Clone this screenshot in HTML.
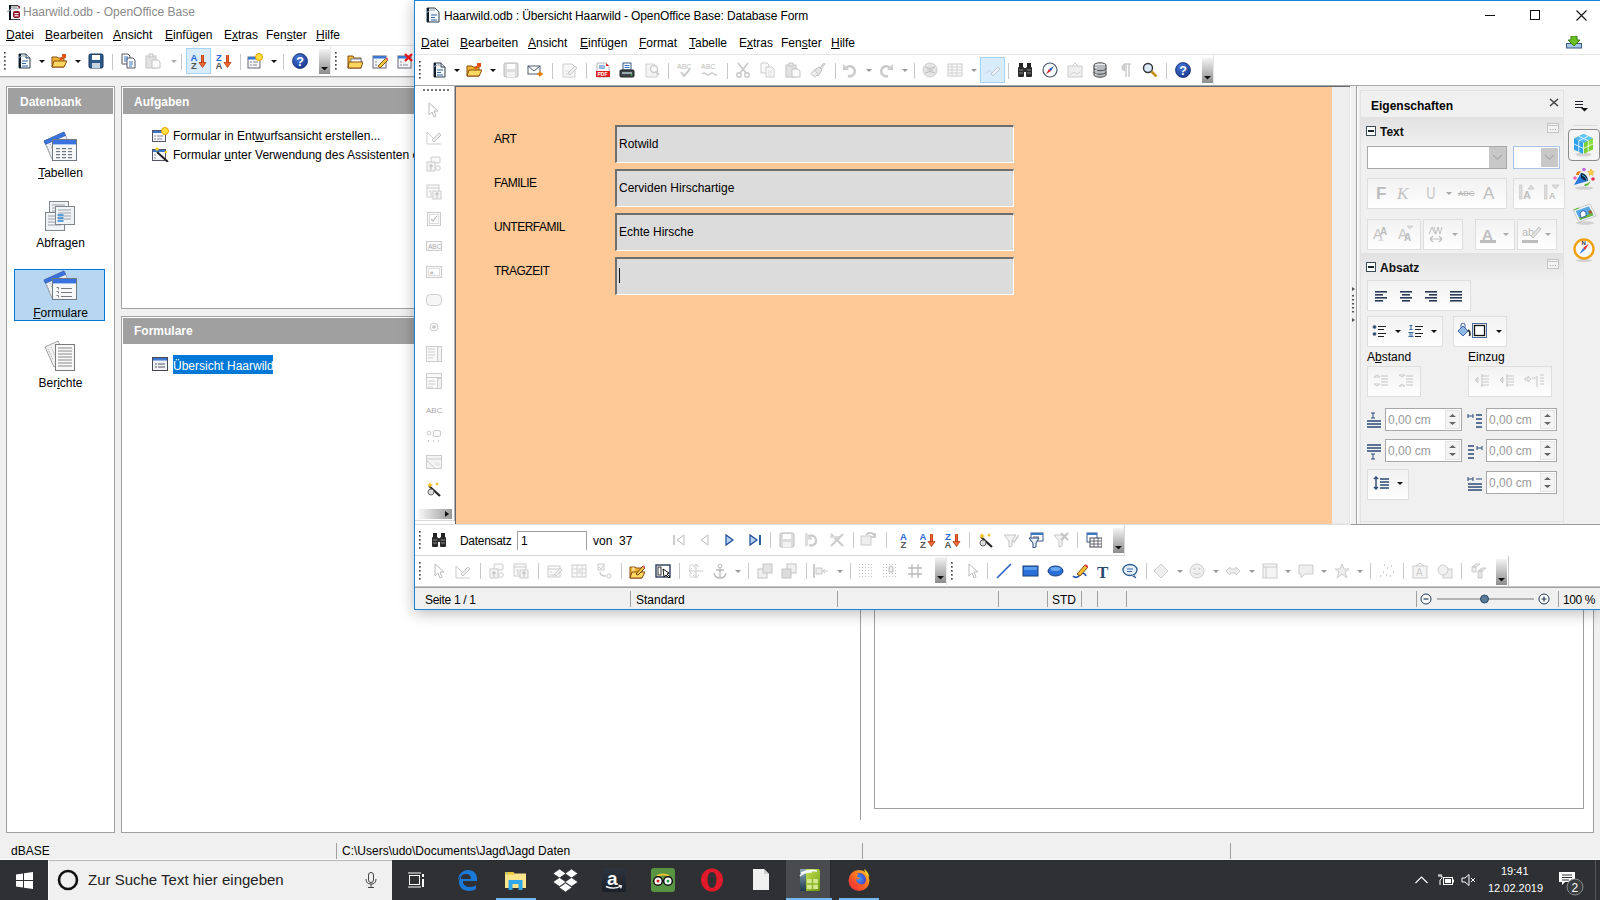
<!DOCTYPE html>
<html><head><meta charset="utf-8">
<style>
*{box-sizing:border-box;margin:0;padding:0}
html,body{width:1600px;height:900px;overflow:hidden;background:#f0f0f0;font-family:"Liberation Sans",sans-serif;font-size:12px;color:#000}
.a{position:absolute}
.t{position:absolute;white-space:nowrap;line-height:1}
u{text-decoration:underline;text-underline-offset:1px}
</style></head><body>
<div class="a" style="left:0px;top:0px;width:1600px;height:76px;background:#fff"></div>
<svg class="a" style="left:4px;top:2px;" width="16" height="18" viewBox="0 0 16 18"><path d="M5.5 3.5h8.5l3.5 3.5v10.5h-12z" fill="#fff" stroke="#3a3a3a"/><path d="M5 3h2v15H5z" fill="#0a1420"/><path d="M3 10q6-5 12-3" stroke="#aab" fill="none" stroke-width="1.2"/><path d="M7 5h6" stroke="#777"/><path d="M14 4l3 3" stroke="#8a1a2a" stroke-width="1.5"/><rect x="9" y="9" width="7" height="7" rx="2" fill="#8c0e24"/><rect x="10.5" y="11" width="4" height="1.2" fill="#fff"/><rect x="10.5" y="13.2" width="4" height="1.2" fill="#fff"/></svg>
<div class="t" style="left:23px;top:6px;font-size:12px;color:#8a8a8a">Haarwild.odb - OpenOffice Base</div>
<div class="t" style="left:6px;top:29px;font-size:12px;"><u>D</u>atei</div>
<div class="t" style="left:45px;top:29px;font-size:12px;"><u>B</u>earbeiten</div>
<div class="t" style="left:113px;top:29px;font-size:12px;"><u>A</u>nsicht</div>
<div class="t" style="left:165px;top:29px;font-size:12px;"><u>E</u>infügen</div>
<div class="t" style="left:224px;top:29px;font-size:12px;">E<u>x</u>tras</div>
<div class="t" style="left:266px;top:29px;font-size:12px;">Fen<u>s</u>ter</div>
<div class="t" style="left:316px;top:29px;font-size:12px;"><u>H</u>ilfe</div>
<div class="a" style="left:0px;top:45px;width:1600px;height:1px;background:#e6e6e6"></div>
<div class="a" style="left:0px;top:76px;width:1600px;height:1px;background:#a8a8a8"></div>
<div class="a" style="left:0px;top:77px;width:1600px;height:1px;background:#d8d8d8"></div>
<div class="a" style="left:6px;top:86px;width:109px;height:747px;background:#fff;border:1px solid #a0a0a0"></div>
<div class="a" style="left:8px;top:88px;width:105px;height:26px;background:#a0a0a0"></div>
<div class="t" style="left:20px;top:96px;font-size:12px;color:#fff;font-weight:bold">Datenbank</div>
<div class="a" style="left:121px;top:86px;width:1479px;height:223px;background:#fff;border:1px solid #a0a0a0"></div>
<div class="a" style="left:123px;top:88px;width:1477px;height:26px;background:#a0a0a0"></div>
<div class="t" style="left:134px;top:96px;font-size:12px;color:#fff;font-weight:bold">Aufgaben</div>
<div class="a" style="left:121px;top:316px;width:1473px;height:517px;background:#fff;border:1px solid #a0a0a0"></div>
<div class="a" style="left:123px;top:318px;width:1471px;height:26px;background:#a0a0a0"></div>
<div class="t" style="left:134px;top:325px;font-size:12px;color:#fff;font-weight:bold">Formulare</div>
<div class="a" style="left:14px;top:269px;width:91px;height:52px;background:#b6d6f1;border:1px solid #0078d7"></div>
<div class="t" style="left:6px;width:109px;text-align:center;top:167px"><u>T</u>abellen</div>
<div class="t" style="left:6px;width:109px;text-align:center;top:237px">Abfra<u>g</u>en</div>
<div class="t" style="left:6px;width:109px;text-align:center;top:307px"><u>F</u>ormulare</div>
<div class="t" style="left:6px;width:109px;text-align:center;top:377px">Ber<u>i</u>chte</div>
<div class="t" style="left:173px;top:130px;font-size:12px;">Formular in Ent<u>w</u>urfsansicht erstellen...</div>
<div class="t" style="left:173px;top:149px;font-size:12px;">Formular <u>u</u>nter Verwendung des Assistenten erstellen...</div>
<div class="a" style="left:173px;top:355px;width:100px;height:19px;background:#0078d7"></div>
<div class="t" style="left:173px;top:360px;font-size:12px;color:#fff">Übersicht Haarwild</div>
<div class="a" style="left:860px;top:610px;width:1px;height:210px;background:#a0a0a0"></div>
<div class="a" style="left:874px;top:600px;width:710px;height:209px;border:1px solid #a0a0a0;border-top:none"></div>
<div class="t" style="left:11px;top:845px;font-size:12px;">dBASE</div>
<div class="a" style="left:336px;top:843px;width:1px;height:16px;background:#a0a0a0"></div>
<div class="t" style="left:342px;top:845px;font-size:12px;">C:\Users\udo\Documents\Jagd\Jagd Daten</div>
<div class="a" style="left:862px;top:843px;width:1px;height:16px;background:#a0a0a0"></div>
<div class="a" style="left:1230px;top:843px;width:1px;height:16px;background:#a0a0a0"></div>
<div class="a" style="left:0px;top:860px;width:1600px;height:40px;background:#2e3034"></div>
<div class="a" style="left:392px;top:860px;width:1208px;height:1px;background:#292b2f"></div>
<div class="a" style="left:48px;top:860px;width:344px;height:40px;background:#f0f0f0;border-top:1px solid #b8b8b8;border-left:1px solid #fafafa"></div>
<div class="a" style="left:0px;top:859px;width:1600px;height:1px;background:#fafafa"></div>
<div class="a" style="left:786px;top:860px;width:44px;height:40px;background:#4a4b4e"></div>
<div class="a" style="left:830px;top:860px;width:1px;height:40px;background:#2a2b2e"></div>
<div class="t" style="left:88px;top:872px;font-size:15px;color:#222">Zur Suche Text hier eingeben</div>
<div class="t" style="left:1501px;top:866px;font-size:11px;color:#fff">19:41</div>
<div class="t" style="left:1488px;top:883px;font-size:11px;color:#fff">12.02.2019</div>
<svg class="a" style="left:16px;top:872px;" width="17" height="17" viewBox="0 0 17 17"><path d="M0 2.5l7-1v6.5H0z M8 1.3l9-1.3v8H8z M0 9h7v6.5l-7-1z M8 9h9v8l-9-1.3z" fill="#fff"/></svg>
<svg class="a" style="left:57px;top:869px;" width="22" height="22" viewBox="0 0 22 22"><circle cx="11" cy="11" r="9" fill="none" stroke="#111" stroke-width="2.6"/></svg>
<svg class="a" style="left:365px;top:872px;" width="12" height="16" viewBox="0 0 12 16"><rect x="3.5" y="0.5" width="5" height="10" rx="2.5" fill="none" stroke="#444"/><path d="M1 7q0 5 5 5t5-5M6 12v3M3 15.5h6" stroke="#444" fill="none"/></svg>
<svg class="a" style="left:407px;top:872px;" width="18" height="16" viewBox="0 0 18 16"><rect x="2.5" y="3.5" width="10" height="9" fill="none" stroke="#fff"/><path d="M1 1h13M1 15h13" stroke="#fff"/><rect x="15" y="2" width="2" height="3" fill="#fff"/><rect x="15" y="7" width="2" height="8" fill="#fff"/></svg>
<svg class="a" style="left:456px;top:869px;" width="22" height="22" viewBox="0 0 22 22"><path d="M2 12C2 5 7 1 12 1c6 0 9 4 9 9v2H7c0 4 3 6 7 6 3 0 5-1 6-2v4c-2 1-4 2-7 2-6 0-10-4-10-9 0-3 1-5 3-7-1 2-1 3-1 4h10c0-3-2-5-5-5-4 0-7 3-8 7z" fill="#1a78d8"/></svg>
<svg class="a" style="left:504px;top:870px;" width="23" height="20" viewBox="0 0 23 20"><path d="M1 2h8l1.5 1.5H22V18H1z" fill="#fde58c"/><path d="M1 2h8l1.5 1.5v1H1z" fill="#f0c838"/><rect x="2" y="2.5" width="1.5" height="1" fill="#3ab0e0"/><path d="M4.5 10h14v10h-4v-6h-6v6h-4z" fill="#2ea8ea"/></svg>
<div class="a" style="left:496px;top:898px;width:40px;height:2px;background:#76b9ed"></div>
<svg class="a" style="left:553px;top:869px;" width="25" height="23" viewBox="0 0 25 23"><g fill="#fff" stroke="#2e3034" stroke-width=".7"><path d="M0 4.5L6.5 0 13 4.5 6.5 9z"/><path d="M12 4.5L18.5 0 25 4.5 18.5 9z"/><path d="M0 13L6.5 8.5 13 13 6.5 17.5z"/><path d="M12 13l6.5-4.5L25 13l-6.5 4.5z"/><path d="M6 18.5L12.5 14 19 18.5 12.5 23z"/></g></svg>
<svg class="a" style="left:602px;top:868px;" width="24" height="24" viewBox="0 0 24 24"><defs><linearGradient id="amz" x1="0" y1="0" x2="0" y2="1"><stop offset="0" stop-color="#2c3440"/><stop offset="1" stop-color="#1a2028"/></linearGradient></defs><rect x="0" y="0" width="24" height="24" rx="2" fill="url(#amz)"/><text x="5" y="17" font-size="19" font-weight="bold" font-family="Liberation Sans" fill="#fff">a</text><path d="M4 18.5q8 3.5 15-0.5" stroke="#fff" stroke-width="1.4" fill="none"/><path d="M16.5 17l3 .8-.8 2.6" stroke="#fff" stroke-width="1.2" fill="none"/></svg>
<svg class="a" style="left:651px;top:868px;" width="24" height="24" viewBox="0 0 24 24"><rect x="0" y="0" width="24" height="24" rx="3" fill="#589442"/><path d="M6 8q6-3 12 0" stroke="#f4c030" stroke-width="2" fill="none"/><circle cx="7" cy="13" r="4.3" fill="#fff" stroke="#111" stroke-width="1.5"/><circle cx="17" cy="13" r="4.3" fill="#fff" stroke="#111" stroke-width="1.5"/><circle cx="7" cy="13" r="1.5" fill="#d02020"/><circle cx="17" cy="13" r="1.5" fill="#20a040"/></svg>
<svg class="a" style="left:700px;top:868px;" width="24" height="24" viewBox="0 0 24 24"><ellipse cx="12" cy="12" rx="11" ry="11.5" fill="#e01a2a"/><ellipse cx="12" cy="12" rx="4.5" ry="8" fill="#2e3034"/></svg>
<svg class="a" style="left:753px;top:869px;" width="16" height="21" viewBox="0 0 16 21"><path d="M0 0h11l5 5v16H0z" fill="#f0f0f0"/><path d="M11 0v5h5" fill="#ccc"/></svg>
<svg class="a" style="left:798px;top:868px;" width="24" height="24" viewBox="0 0 24 24"><defs><linearGradient id="clg" x1="0" y1="0" x2="1" y2="1"><stop offset="0" stop-color="#d8f060"/><stop offset="1" stop-color="#6a9a10"/></linearGradient><linearGradient id="cls" x1="0" y1="0" x2="0" y2="1"><stop offset="0" stop-color="#8aa8b8"/><stop offset="1" stop-color="#1e3a4a"/></linearGradient></defs><path d="M2 1h19l1 2v19l-1 1H2z" fill="url(#clg)"/><path d="M2 1h6v22H2z" fill="url(#cls)"/><path d="M2 8q5-5 12-4M3 5q8-4 16-2" stroke="#f4f8f8" stroke-width="1.6" fill="none"/><rect x="9" y="11" width="11" height="10" fill="#d4e890"/><path d="M14.5 11v10M9 16h11" stroke="#8ab828" stroke-width="1.4"/></svg>
<div class="a" style="left:786px;top:898px;width:46px;height:2px;background:#76b9ed"></div>
<svg class="a" style="left:847px;top:868px;" width="24" height="24" viewBox="0 0 24 24"><defs><radialGradient id="ffg" cx=".45" cy=".45" r=".6"><stop offset="0" stop-color="#3aa0f0"/><stop offset="1" stop-color="#4a3ac8"/></radialGradient><linearGradient id="ffo" x1="0" y1="1" x2="1" y2="0"><stop offset="0" stop-color="#e8203a"/><stop offset=".6" stop-color="#ff7a20"/><stop offset="1" stop-color="#ffd030"/></linearGradient></defs><circle cx="12" cy="12.5" r="10.5" fill="url(#ffo)"/><circle cx="12.5" cy="11.5" r="6.5" fill="url(#ffg)"/><path d="M3 9c1 6 5 10 10 10 4 0 7-2 8-5-2 2-5 3-8 2-3-1-4-3-4-5 2 1 4 0 4-1l-3-1c0-2 1-3 2-3-3-1-6 0-8 3z" fill="url(#ffo)"/><path d="M17 1c2 1 5 4 5 8l-3-3z" fill="#ffd030"/></svg>
<div class="a" style="left:839px;top:898px;width:40px;height:2px;background:#76b9ed"></div>
<svg class="a" style="left:1415px;top:876px;" width="13" height="8" viewBox="0 0 13 8"><path d="M.5 7l6-6 6 6" stroke="#fff" fill="none" stroke-width="1.1"/></svg>
<svg class="a" style="left:1437px;top:874px;" width="17" height="12" viewBox="0 0 17 12"><path d="M2 0v2M4 0v2M1 2h4v2l-2 2v5" stroke="#fff" fill="none"/><rect x="6.5" y="3.5" width="9" height="7" fill="none" stroke="#fff"/><rect x="8" y="5" width="6" height="4" fill="#fff"/><rect x="15.5" y="5.5" width="1.5" height="3" fill="#fff"/></svg>
<svg class="a" style="left:1461px;top:874px;" width="15" height="12" viewBox="0 0 15 12"><path d="M1 4h3l4-3.5v11L4 8H1z" fill="none" stroke="#fff"/><path d="M10 4l4 4M14 4l-4 4" stroke="#fff"/></svg>
<svg class="a" style="left:1559px;top:872px;" width="25" height="25" viewBox="0 0 25 25"><path d="M0 0h16v10H6l-3 3v-3H0z" fill="#fff"/><path d="M3 3h10M3 5.5h10M3 8h7" stroke="#2e3034"/><circle cx="16" cy="15" r="8" fill="#3a3d40" stroke="#888"/><text x="12.5" y="19.5" font-size="12" font-family="Liberation Sans" fill="#fff">2</text></svg>
<div class="a" style="left:1595px;top:860px;width:1px;height:40px;background:#555"></div>
<div class="a" style="left:414px;top:0px;width:1186px;height:610px;background:#fff;border:1px solid #1883d7;border-right:none;box-shadow:0 3px 14px rgba(0,0,0,0.28)"></div>
<div class="t" style="left:444px;top:10px;font-size:12px;letter-spacing:-0.12px">Haarwild.odb : Übersicht Haarwild - OpenOffice Base: Database Form</div>
<div class="t" style="left:421px;top:37px;font-size:12px;"><u>D</u>atei</div>
<div class="t" style="left:460px;top:37px;font-size:12px;"><u>B</u>earbeiten</div>
<div class="t" style="left:528px;top:37px;font-size:12px;"><u>A</u>nsicht</div>
<div class="t" style="left:580px;top:37px;font-size:12px;"><u>E</u>infügen</div>
<div class="t" style="left:639px;top:37px;font-size:12px;"><u>F</u>ormat</div>
<div class="t" style="left:689px;top:37px;font-size:12px;"><u>T</u>abelle</div>
<div class="t" style="left:739px;top:37px;font-size:12px;">E<u>x</u>tras</div>
<div class="t" style="left:781px;top:37px;font-size:12px;">Fen<u>s</u>ter</div>
<div class="t" style="left:831px;top:37px;font-size:12px;"><u>H</u>ilfe</div>
<div class="a" style="left:415px;top:54px;width:1185px;height:1px;background:#e6e6e6"></div>
<div class="a" style="left:415px;top:85px;width:1185px;height:1px;background:#a8a8a8"></div>
<div class="a" style="left:415px;top:86px;width:1185px;height:438px;background:#f0f0f0"></div>
<div class="a" style="left:415px;top:86px;width:40px;height:438px;background:#fff"></div>
<div class="a" style="left:455px;top:86px;width:895px;height:438px;background:#efefef;border-left:1px solid #64686c;border-top:1px solid #64686c"></div>
<div class="a" style="left:456px;top:87px;width:876px;height:437px;background:#fec997"></div>
<div class="t" style="left:494px;top:133px;font-size:12px;letter-spacing:-0.5px">ART</div>
<div class="a" style="left:615px;top:125px;width:399px;height:38px;background:#dcdcdc;border-top:2px solid #6e6e6e;border-left:2px solid #6e6e6e;border-right:1px solid #fff;border-bottom:1px solid #fff"></div>
<div class="t" style="left:619px;top:138px;font-size:12px;">Rotwild</div>
<div class="t" style="left:494px;top:177px;font-size:12px;letter-spacing:-0.5px">FAMILIE</div>
<div class="a" style="left:615px;top:169px;width:399px;height:38px;background:#dcdcdc;border-top:2px solid #6e6e6e;border-left:2px solid #6e6e6e;border-right:1px solid #fff;border-bottom:1px solid #fff"></div>
<div class="t" style="left:619px;top:182px;font-size:12px;">Cerviden Hirschartige</div>
<div class="t" style="left:494px;top:221px;font-size:12px;letter-spacing:-0.5px">UNTERFAMIL</div>
<div class="a" style="left:615px;top:213px;width:399px;height:38px;background:#dcdcdc;border-top:2px solid #6e6e6e;border-left:2px solid #6e6e6e;border-right:1px solid #fff;border-bottom:1px solid #fff"></div>
<div class="t" style="left:619px;top:226px;font-size:12px;">Echte Hirsche</div>
<div class="t" style="left:494px;top:265px;font-size:12px;letter-spacing:-0.5px">TRAGZEIT</div>
<div class="a" style="left:615px;top:257px;width:399px;height:38px;background:#dcdcdc;border-top:2px solid #6e6e6e;border-left:2px solid #6e6e6e;border-right:1px solid #fff;border-bottom:1px solid #fff"></div>
<div class="a" style="left:619px;top:268px;width:1px;height:15px;background:#111"></div>
<div class="a" style="left:1358px;top:86px;width:242px;height:438px;background:#f0f0f0"></div>
<div class="a" style="left:415px;top:524px;width:1185px;height:64px;background:#fff"></div>
<div class="a" style="left:415px;top:555px;width:710px;height:1px;background:#d8d8d8"></div>
<div class="a" style="left:1124px;top:524px;width:1px;height:32px;background:#d8d8d8"></div>
<div class="a" style="left:415px;top:524px;width:936px;height:1px;background:#e0e0e0"></div>
<div class="a" style="left:415px;top:586px;width:1185px;height:1px;background:#c8c8c8"></div>
<div class="a" style="left:415px;top:587px;width:1185px;height:1px;background:#a0a0a0"></div>
<div class="a" style="left:415px;top:588px;width:1185px;height:21px;background:#f0f0f0"></div>
<div class="t" style="left:460px;top:535px;font-size:12px;letter-spacing:-0.3px">Datensatz</div>
<div class="a" style="left:517px;top:531px;width:70px;height:19px;background:#fff;border:1px solid #a0a0a0;border-bottom:none"></div>
<div class="t" style="left:521px;top:535px;font-size:12px;">1</div>
<div class="t" style="left:593px;top:535px;font-size:12px;">von&nbsp; 37</div>
<div class="t" style="left:425px;top:594px;font-size:12px;letter-spacing:-0.3px">Seite 1 / 1</div>
<div class="t" style="left:636px;top:594px;font-size:12px;">Standard</div>
<div class="t" style="left:1052px;top:594px;font-size:12px;">STD</div>
<div class="t" style="left:1563px;top:594px;font-size:12px;letter-spacing:-0.4px">100 %</div>
<div class="a" style="left:630px;top:591px;width:1px;height:16px;background:#a0a0a0"></div>
<div class="a" style="left:837px;top:591px;width:1px;height:16px;background:#a0a0a0"></div>
<div class="a" style="left:998px;top:591px;width:1px;height:16px;background:#a0a0a0"></div>
<div class="a" style="left:1047px;top:591px;width:1px;height:16px;background:#a0a0a0"></div>
<div class="a" style="left:1081px;top:591px;width:1px;height:16px;background:#a0a0a0"></div>
<div class="a" style="left:1097px;top:591px;width:1px;height:16px;background:#a0a0a0"></div>
<div class="a" style="left:1126px;top:591px;width:1px;height:16px;background:#a0a0a0"></div>
<div class="a" style="left:1416px;top:591px;width:1px;height:16px;background:#a0a0a0"></div>
<div class="a" style="left:1558px;top:591px;width:1px;height:16px;background:#a0a0a0"></div>
<div class="a" style="left:1332px;top:87px;width:18px;height:437px;background:#efefef"></div>
<div class="a" style="left:1350px;top:86px;width:1px;height:438px;background:#fff"></div>
<div class="a" style="left:1356px;top:86px;width:1px;height:438px;background:#a0a0a0"></div>
<div class="a" style="left:1357px;top:86px;width:1px;height:438px;background:#fff"></div>
<svg class="a" style="left:1351px;top:286px;" width="5" height="40" viewBox="0 0 5 40"><path d="M1 1l3 2-3 2z" fill="#555"/><rect x="1" y="9" width="2" height="1.5" fill="#555"/><rect x="1" y="13" width="2" height="1.5" fill="#555"/><rect x="1" y="17" width="2" height="1.5" fill="#555"/><rect x="1" y="21" width="2" height="1.5" fill="#555"/><rect x="1" y="25" width="2" height="1.5" fill="#555"/><path d="M1 32l3 2-3 2z" fill="#555"/></svg>
<div class="a" style="left:1360px;top:90px;width:204px;height:434px;background:#f0f0f0;border:1px solid #e2e2e2;border-bottom:none"></div>
<div class="t" style="left:1371px;top:100px;font-size:12px;font-weight:bold;color:#000">Eigenschaften</div>
<svg class="a" style="left:1549px;top:98px;" width="10" height="9" viewBox="0 0 10 9"><path d="M1 1l8 7M9 1l-8 7" stroke="#444" stroke-width="1.6"/></svg>
<div class="a" style="left:1361px;top:117px;width:202px;height:28px;background:linear-gradient(to bottom,#e2e2e2,#f0f0f0)"></div>
<svg class="a" style="left:1366px;top:126px;" width="10" height="10" viewBox="0 0 10 10"><rect x="0.5" y="0.5" width="9" height="9" fill="#fff" stroke="#3c4b5c"/><rect x="2" y="4" width="6" height="2" fill="#1a2530"/></svg>
<div class="t" style="left:1380px;top:126px;font-size:12px;font-weight:bold;color:#111">Text</div>
<svg class="a" style="left:1547px;top:123px;" width="12" height="10" viewBox="0 0 12 10"><rect x="0.5" y="0.5" width="11" height="9" fill="#f4f4f4" stroke="#c4c4c4"/><path d="M0.5 2.5h11" stroke="#c4c4c4"/><path d="M3 6.5h1M5.5 6.5h1M8 6.5h1" stroke="#999"/></svg>
<div class="a" style="left:1367px;top:146px;width:140px;height:23px;background:#fff;border:1px solid #a8a8a8"></div>
<div class="a" style="left:1489px;top:147px;width:17px;height:21px;background:#c8c8c8"></div>
<svg class="a" style="left:1491px;top:153px;" width="13" height="8" viewBox="0 0 13 8"><path d="M2 2l4.5 4 4.5-4" stroke="#9a9a9a" fill="none"/></svg>
<div class="a" style="left:1513px;top:146px;width:47px;height:23px;background:#fff;border:1px solid #a9c3e4"></div>
<div class="a" style="left:1541px;top:148px;width:17px;height:19px;background:#c8c8c8"></div>
<svg class="a" style="left:1543px;top:153px;" width="13" height="8" viewBox="0 0 13 8"><path d="M2 2l4.5 4 4.5-4" stroke="#9a9a9a" fill="none"/></svg>
<div class="a" style="left:1367px;top:178px;width:140px;height:31px;background:linear-gradient(to bottom,#f2f2f2,#fefefe);border:1px solid #dedede"></div>
<div class="a" style="left:1513px;top:178px;width:52px;height:31px;background:linear-gradient(to bottom,#f2f2f2,#fefefe);border:1px solid #dedede"></div>
<div class="a" style="left:1367px;top:219px;width:54px;height:31px;background:linear-gradient(to bottom,#f2f2f2,#fefefe);border:1px solid #dedede"></div>
<div class="a" style="left:1423px;top:219px;width:40px;height:31px;background:linear-gradient(to bottom,#f2f2f2,#fefefe);border:1px solid #dedede"></div>
<div class="a" style="left:1475px;top:219px;width:40px;height:31px;background:linear-gradient(to bottom,#f2f2f2,#fefefe);border:1px solid #dedede"></div>
<div class="a" style="left:1517px;top:219px;width:40px;height:31px;background:linear-gradient(to bottom,#f2f2f2,#fefefe);border:1px solid #dedede"></div>
<div class="t" style="left:1376px;top:184px;font:bold 17px Liberation Sans;color:#bdbdbd">F</div>
<div class="t" style="left:1397px;top:184px;font:italic 17px Liberation Serif;color:#c2c2c2">K</div>
<div class="t" style="left:1425px;top:185px;font:16px Liberation Sans;color:#c8c8c8;transform:scaleX(.8)">U</div>
<svg class="a" style="left:1446px;top:192px;" width="6" height="4" viewBox="0 0 6 4"><path d="M0 0h6l-3 3z" fill="#aaa"/></svg>
<div class="t" style="left:1458px;top:189px;font:8px Liberation Sans;color:#b4b4b4;text-decoration:line-through">ABC</div>
<div class="t" style="left:1483px;top:184px;font:17px Liberation Sans;color:#bdbdbd">A</div>
<svg class="a" style="left:1519px;top:184px;" width="17" height="16" viewBox="0 0 17 16"><rect x="0" y="1" width="3" height="14" fill="#ddd" stroke="#c4c4c4" stroke-width=".6"/><text x="4" y="15" font-size="11" font-weight="bold" font-family="Liberation Sans" fill="#c0c0c0">A</text><path d="M9 5l3-4 3 4z" fill="#ddd" stroke="#c4c4c4" stroke-width=".8"/></svg>
<svg class="a" style="left:1544px;top:184px;" width="17" height="16" viewBox="0 0 17 16"><rect x="0" y="1" width="3" height="14" fill="#ddd" stroke="#c4c4c4" stroke-width=".6"/><text x="5" y="15" font-size="9" font-weight="bold" font-family="Liberation Sans" fill="#c0c0c0">A</text><path d="M8 1h7l-3.5 4z" fill="#ddd" stroke="#c4c4c4" stroke-width=".8"/></svg>
<svg class="a" style="left:1373px;top:225px;" width="17" height="18" viewBox="0 0 17 18"><text x="0" y="14" font-size="14" font-family="Liberation Sans" fill="#c6c6c6">A</text><text x="7" y="10" font-size="10" font-weight="bold" font-family="Liberation Sans" fill="#bcbcbc">A</text><path d="M8 13l3 3h-6z" fill="#ddd"/></svg>
<svg class="a" style="left:1398px;top:225px;" width="17" height="18" viewBox="0 0 17 18"><text x="0" y="14" font-size="14" font-family="Liberation Sans" fill="#c6c6c6">A</text><text x="6" y="16" font-size="10" font-weight="bold" font-family="Liberation Sans" fill="#bcbcbc">A</text><path d="M9 1h6l-3 3z" fill="#ddd" stroke="#c8c8c8" stroke-width=".6"/></svg>
<svg class="a" style="left:1428px;top:226px;" width="16" height="17" viewBox="0 0 16 17"><path d="M1 8l3-7 3 7M6 1l2 7 2-7 2 7 2-7" stroke="#c0c0c0" fill="none"/><path d="M2 13h12M2 13l3-3M2 13l3 3M14 13l-3-3M14 13l-3 3" stroke="#c0c0c0" fill="none" stroke-width="1.2"/></svg>
<svg class="a" style="left:1452px;top:233px;" width="6" height="4" viewBox="0 0 6 4"><path d="M0 0h6l-3 3z" fill="#aaa"/></svg>
<div class="t" style="left:1482px;top:226px;font:bold 15px Liberation Sans;color:#c0c0c0">A</div>
<div class="a" style="left:1480px;top:240px;width:16px;height:3px;background:#bcbcbc"></div>
<svg class="a" style="left:1503px;top:233px;" width="6" height="4" viewBox="0 0 6 4"><path d="M0 0h6l-3 3z" fill="#aaa"/></svg>
<div class="t" style="left:1522px;top:226px;font:11px Liberation Sans;color:#bbb">ab</div>
<svg class="a" style="left:1529px;top:225px;" width="12" height="13" viewBox="0 0 12 13"><path d="M2 11l8-9 2 2-8 9z" fill="#e4e4e4" stroke="#c0c0c0"/></svg>
<div class="a" style="left:1522px;top:240px;width:16px;height:3px;background:#bcbcbc"></div>
<svg class="a" style="left:1545px;top:233px;" width="6" height="4" viewBox="0 0 6 4"><path d="M0 0h6l-3 3z" fill="#aaa"/></svg>
<div class="a" style="left:1361px;top:253px;width:202px;height:28px;background:linear-gradient(to bottom,#e2e2e2,#f0f0f0)"></div>
<svg class="a" style="left:1366px;top:262px;" width="10" height="10" viewBox="0 0 10 10"><rect x="0.5" y="0.5" width="9" height="9" fill="#fff" stroke="#3c4b5c"/><rect x="2" y="4" width="6" height="2" fill="#1a2530"/></svg>
<div class="t" style="left:1380px;top:262px;font-size:12px;font-weight:bold;color:#111">Absatz</div>
<svg class="a" style="left:1547px;top:259px;" width="12" height="10" viewBox="0 0 12 10"><rect x="0.5" y="0.5" width="11" height="9" fill="#f4f4f4" stroke="#c4c4c4"/><path d="M0.5 2.5h11" stroke="#c4c4c4"/><path d="M3 6.5h1M5.5 6.5h1M8 6.5h1" stroke="#999"/></svg>
<div class="a" style="left:1367px;top:280px;width:104px;height:31px;background:linear-gradient(to bottom,#f2f2f2,#fefefe);border:1px solid #dedede"></div>
<svg class="a" style="left:1375px;top:291px;" width="13" height="13" viewBox="0 0 13 13"><rect x="0" y="0" width="12" height="1.6" fill="#2a3b55"/><rect x="0" y="3" width="8" height="1.6" fill="#2a3b55"/><rect x="0" y="6" width="12" height="1.6" fill="#2a3b55"/><rect x="0" y="9" width="8" height="1.6" fill="#2a3b55"/></svg>
<svg class="a" style="left:1400px;top:291px;" width="13" height="13" viewBox="0 0 13 13"><rect x="0" y="0" width="12" height="1.6" fill="#2a3b55"/><rect x="2" y="3" width="8" height="1.6" fill="#2a3b55"/><rect x="0" y="6" width="12" height="1.6" fill="#2a3b55"/><rect x="2" y="9" width="8" height="1.6" fill="#2a3b55"/></svg>
<svg class="a" style="left:1425px;top:291px;" width="13" height="13" viewBox="0 0 13 13"><rect x="0" y="0" width="12" height="1.6" fill="#2a3b55"/><rect x="4" y="3" width="8" height="1.6" fill="#2a3b55"/><rect x="0" y="6" width="12" height="1.6" fill="#2a3b55"/><rect x="4" y="9" width="8" height="1.6" fill="#2a3b55"/></svg>
<svg class="a" style="left:1450px;top:291px;" width="13" height="13" viewBox="0 0 13 13"><rect x="0" y="0" width="12" height="1.6" fill="#2a3b55"/><rect x="0" y="3" width="12" height="1.6" fill="#2a3b55"/><rect x="0" y="6" width="12" height="1.6" fill="#2a3b55"/><rect x="0" y="9" width="12" height="1.6" fill="#2a3b55"/></svg>
<div class="a" style="left:1367px;top:316px;width:76px;height:31px;background:linear-gradient(to bottom,#f2f2f2,#fefefe);border:1px solid #dedede"></div>
<div class="a" style="left:1453px;top:316px;width:54px;height:31px;background:linear-gradient(to bottom,#f2f2f2,#fefefe);border:1px solid #dedede"></div>
<svg class="a" style="left:1372px;top:324px;" width="16" height="13" viewBox="0 0 16 13"><circle cx="2.5" cy="3" r="1.8" fill="#2d4a6b" stroke="#9ab" stroke-width=".5"/><circle cx="2.5" cy="10" r="1.8" fill="#2d4a6b" stroke="#9ab" stroke-width=".5"/><path d="M6 2.5h8M6 5.5h6M6 9.5h8M6 12.5h6" stroke="#222" stroke-width="1"/></svg>
<svg class="a" style="left:1395px;top:330px;" width="6" height="4" viewBox="0 0 6 4"><path d="M0 0h6l-3 3z" fill="#111"/></svg>
<svg class="a" style="left:1408px;top:324px;" width="16" height="14" viewBox="0 0 16 14"><path d="M1.5 1.5h3M3 1.5v4M1.5 5.5h3M0.5 8.5h5M2 8.5v4M4 8.5v4M0.5 12.5h5" stroke="#3a6aa0" stroke-width="1"/><path d="M7 2.5h8M7 5.5h6M7 9.5h8M7 12.5h6" stroke="#222" stroke-width="1"/></svg>
<svg class="a" style="left:1431px;top:330px;" width="6" height="4" viewBox="0 0 6 4"><path d="M0 0h6l-3 3z" fill="#111"/></svg>
<svg class="a" style="left:1457px;top:323px;" width="14" height="15" viewBox="0 0 14 15"><path d="M1 8l5-5 5 5-5 5z" fill="#8fb8e8" stroke="#3a68a8"/><path d="M4 5V2a2 2 0 0 1 4 0v3" stroke="#3a68a8" fill="none"/><path d="M11 7q3 2 1.5 6" stroke="#222" fill="none" stroke-width="1.6"/></svg>
<svg class="a" style="left:1472px;top:323px;" width="15" height="15" viewBox="0 0 15 15"><rect x="0.5" y="0.5" width="14" height="14" fill="none" stroke="#4a6a98"/><rect x="2.5" y="2.5" width="10" height="10" fill="#fff" stroke="#111" stroke-width="1.3"/></svg>
<svg class="a" style="left:1496px;top:330px;" width="6" height="4" viewBox="0 0 6 4"><path d="M0 0h6l-3 3z" fill="#111"/></svg>
<div class="t" style="left:1367px;top:351px;font-size:12px;">A<u>b</u>stand</div>
<div class="t" style="left:1468px;top:351px;font-size:12px;">Einzug</div>
<div class="a" style="left:1367px;top:366px;width:54px;height:31px;background:linear-gradient(to bottom,#f2f2f2,#fefefe);border:1px solid #dedede"></div>
<div class="a" style="left:1468px;top:366px;width:84px;height:31px;background:linear-gradient(to bottom,#f2f2f2,#fefefe);border:1px solid #dedede"></div>
<svg class="a" style="left:1373px;top:374px;" width="16" height="13" viewBox="0 0 16 13"><path d="M1 3l3-2 3 2z M1 10l3 2 3-2z" fill="none" stroke="#ccc"/><path d="M8 2h7M8 5h7M8 8h7M8 11h7" stroke="#c4c4c4" stroke-width="1.2"/></svg>
<svg class="a" style="left:1398px;top:374px;" width="16" height="13" viewBox="0 0 16 13"><path d="M1 1l3 2 3-2z M1 12l3-2 3 2z" fill="none" stroke="#ccc"/><path d="M8 2h7M8 5h7M8 8h7M8 11h7" stroke="#c4c4c4" stroke-width="1.2"/></svg>
<svg class="a" style="left:1474px;top:374px;" width="16" height="13" viewBox="0 0 16 13"><path d="M1 6l3-3v6z" fill="#ddd" stroke="#ccc"/><path d="M7 2h8M9 5h6M9 8h6M7 11h8M8 0v13" stroke="#c8c8c8" stroke-width="1.1"/></svg>
<svg class="a" style="left:1499px;top:374px;" width="16" height="13" viewBox="0 0 16 13"><path d="M1 6l3-3v6z" fill="#ddd" stroke="#ccc"/><path d="M7 2h8M9 5h6M9 8h6M7 11h8M8 0v13" stroke="#c8c8c8" stroke-width="1.1"/></svg>
<svg class="a" style="left:1524px;top:374px;" width="20" height="13" viewBox="0 0 20 13"><path d="M1 4h3V2l3 3-3 3V6H1z" fill="#eee" stroke="#ccc"/><path d="M8 4h4M13 2v13M16 1h4M16 4h4M16 7h4M16 10h4" stroke="#c8c8c8" stroke-width="1.1"/></svg>
<div class="a" style="left:1385px;top:408px;width:77px;height:23px;background:#fff;border:1px solid #a8a8a8"></div>
<div class="t" style="left:1388px;top:414px;font-size:12px;color:#9a9a9a">0,00 cm</div>
<div class="a" style="left:1445px;top:410px;width:15px;height:19px;background:#f4f4f4;border:1px solid #e4e4e4"></div>
<svg class="a" style="left:1448px;top:413px;" width="9" height="14" viewBox="0 0 9 14"><path d="M1 4l3.5-3 3.5 3z M1 9l3.5 3 3.5-3z" fill="#666"/></svg>
<div class="a" style="left:1486px;top:408px;width:71px;height:23px;background:#fff;border:1px solid #a8a8a8"></div>
<div class="t" style="left:1489px;top:414px;font-size:12px;color:#9a9a9a">0,00 cm</div>
<div class="a" style="left:1540px;top:410px;width:15px;height:19px;background:#f4f4f4;border:1px solid #e4e4e4"></div>
<svg class="a" style="left:1543px;top:413px;" width="9" height="14" viewBox="0 0 9 14"><path d="M1 4l3.5-3 3.5 3z M1 9l3.5 3 3.5-3z" fill="#666"/></svg>
<div class="a" style="left:1385px;top:439px;width:77px;height:23px;background:#fff;border:1px solid #a8a8a8"></div>
<div class="t" style="left:1388px;top:445px;font-size:12px;color:#9a9a9a">0,00 cm</div>
<div class="a" style="left:1445px;top:441px;width:15px;height:19px;background:#f4f4f4;border:1px solid #e4e4e4"></div>
<svg class="a" style="left:1448px;top:444px;" width="9" height="14" viewBox="0 0 9 14"><path d="M1 4l3.5-3 3.5 3z M1 9l3.5 3 3.5-3z" fill="#666"/></svg>
<div class="a" style="left:1486px;top:439px;width:71px;height:23px;background:#fff;border:1px solid #a8a8a8"></div>
<div class="t" style="left:1489px;top:445px;font-size:12px;color:#9a9a9a">0,00 cm</div>
<div class="a" style="left:1540px;top:441px;width:15px;height:19px;background:#f4f4f4;border:1px solid #e4e4e4"></div>
<svg class="a" style="left:1543px;top:444px;" width="9" height="14" viewBox="0 0 9 14"><path d="M1 4l3.5-3 3.5 3z M1 9l3.5 3 3.5-3z" fill="#666"/></svg>
<div class="a" style="left:1486px;top:471px;width:71px;height:23px;background:#fff;border:1px solid #a8a8a8"></div>
<div class="t" style="left:1489px;top:477px;font-size:12px;color:#9a9a9a">0,00 cm</div>
<div class="a" style="left:1540px;top:473px;width:15px;height:19px;background:#f4f4f4;border:1px solid #e4e4e4"></div>
<svg class="a" style="left:1543px;top:476px;" width="9" height="14" viewBox="0 0 9 14"><path d="M1 4l3.5-3 3.5 3z M1 9l3.5 3 3.5-3z" fill="#666"/></svg>
<div class="a" style="left:1367px;top:469px;width:42px;height:31px;background:linear-gradient(to bottom,#f2f2f2,#fefefe);border:1px solid #dedede"></div>
<svg class="a" style="left:1366px;top:412px;" width="16" height="16" viewBox="0 0 16 16"><path d="M5 1h4M7 1v5M5 6h4" stroke="#2c4a78"/><path d="M1 9h14M1 12h14M1 15h14" stroke="#2c4a78" stroke-width="1.6"/></svg>
<svg class="a" style="left:1366px;top:443px;" width="16" height="18" viewBox="0 0 16 18"><path d="M1 2h14M1 5h14M1 8h14" stroke="#2c4a78" stroke-width="1.6"/><path d="M5 11h4M7 11v5M5 16h4" stroke="#2c4a78"/></svg>
<svg class="a" style="left:1467px;top:412px;" width="16" height="16" viewBox="0 0 16 16"><path d="M1 2v4M1 4h5M6 2v4" stroke="#2c4a78"/><path d="M9 3h6M9 7h6M9 11h6M9 15h6" stroke="#2c4a78" stroke-width="1.6"/></svg>
<svg class="a" style="left:1467px;top:443px;" width="16" height="18" viewBox="0 0 16 18"><path d="M10 3v4M10 5h5M15 3v4" stroke="#2c4a78"/><path d="M1 3h6M1 7h6M1 11h6M1 15h6" stroke="#2c4a78" stroke-width="1.6"/></svg>
<svg class="a" style="left:1467px;top:475px;" width="16" height="16" viewBox="0 0 16 16"><path d="M1 2v4M1 4h5M6 2v4M9 4h6" stroke="#2c4a78"/><path d="M1 9h14M1 12h14M1 15h14" stroke="#2c4a78" stroke-width="1.6"/></svg>
<svg class="a" style="left:1373px;top:476px;" width="16" height="14" viewBox="0 0 16 14"><path d="M3 1v12M1 3l2-2 2 2M1 11l2 2 2-2" stroke="#2c4a78" fill="none" stroke-width="1.4"/><path d="M7 3h9M7 6h9M7 9h9M7 12h9" stroke="#2c4a78" stroke-width="1.6"/></svg>
<svg class="a" style="left:1397px;top:482px;" width="6" height="4" viewBox="0 0 6 4"><path d="M0 0h6l-3 3z" fill="#111"/></svg>
<div class="a" style="left:1360px;top:521px;width:204px;height:1px;background:#e2e2e2"></div>
<svg class="a" style="left:1574px;top:100px;" width="14" height="12" viewBox="0 0 14 12"><path d="M1 1.5h8M1 4.5h8M1 7.5h8" stroke="#223"/><path d="M7 8h7l-3.5 3.5z" fill="#111"/></svg>
<div class="a" style="left:1573px;top:125px;width:24px;height:1px;background:#dcdcdc"></div>
<div class="a" style="left:1568px;top:129px;width:32px;height:32px;background:#f4f4f4;border:1px solid #8a8a8a;border-radius:4px"></div>
<svg class="a" style="left:1573px;top:133px;" width="21" height="24" viewBox="0 0 21 24"><ellipse cx="10.5" cy="21.5" rx="8" ry="2" fill="#d4d4d4"/><path d="M10.5 1L20 5.5v11L10.5 21 1 16.5v-11z" fill="#7ad030"/><path d="M1 5.5L10.5 10v11L1 16.5z" fill="#30a0f0"/><path d="M10.5 1L20 5.5 10.5 10 1 5.5z" fill="#58b8f8"/><path d="M10.5 1L20 5.5l-4.75 2.25L5.75 3.25z" fill="#60c8f8"/><path d="M15.25 7.75L20 5.5v5.5l-4.75 2.25z" fill="#8ee040"/><path d="M10.5 10v11M1 11l9.5 4.5 9.5-4.5M5.75 3.25l9.5 4.5v11M5.75 7.75v11M15.25 3.25L5.75 7.75" stroke="#fff" stroke-width=".8" fill="none"/></svg>
<svg class="a" style="left:1572px;top:167px;" width="24" height="23" viewBox="0 0 24 23"><ellipse cx="12" cy="21" rx="9" ry="1.8" fill="#d0d0d0"/><path d="M2 18l7-12 7 8z" fill="#2a7ad8"/><path d="M9 6c4 0 7 4 7 8-2 0-5-1-7-3z" fill="#0e2a48"/><path d="M10 8c3 1 5 4 5 6" stroke="#4ab0e0" stroke-width="1" fill="none"/><path d="M12 19c4 0 6-2 6-5-1 2-3 3-5 3z" fill="#5ab830"/><path d="M4 8c0-3 3-5 6-3-2 0-3 1-3 3z" fill="#e87818"/><path d="M19 2l1 2.2 2.3.3-1.7 1.6.4 2.3-2-1.1-2 1.1.4-2.3-1.7-1.6 2.3-.3z" fill="#f8d040" stroke="#e0a020" stroke-width=".5"/><circle cx="3" cy="11" r="1.8" fill="#f060b0"/><circle cx="12" cy="2.5" r="1.8" fill="#c060e0"/><circle cx="21" cy="12" r="1.8" fill="#e83050"/></svg>
<svg class="a" style="left:1572px;top:202px;" width="25" height="23" viewBox="0 0 25 23"><ellipse cx="13" cy="21" rx="9" ry="1.8" fill="#d0d0d0"/><path d="M1 8L18 2l6 12-17 6z" fill="#fafafa" stroke="#aaa" stroke-width=".6"/><path d="M3.5 9L17 4.2l4.5 9L8 18z" fill="#58a8e8"/><path d="M7 15.5l13.5-4.8 1 2.5L8 18z" fill="#6ab840"/><path d="M16 9l3-1 1.5 3-3 1z" fill="#a06030"/><path d="M8 11l3-2.5 3 1.5v4l-5 1.8z" fill="#fff" stroke="#2a5aa0" stroke-width=".9"/><path d="M2 8l5-2" stroke="#5ac030" stroke-width="1.2"/></svg>
<svg class="a" style="left:1573px;top:238px;" width="22" height="24" viewBox="0 0 22 24"><ellipse cx="11" cy="22.5" rx="8" ry="1.5" fill="#d0d0d0"/><circle cx="11" cy="11" r="9.5" fill="#fff" stroke="#f0a010" stroke-width="2.4"/><path d="M16 5.5l-4 6.5-2-2z" fill="#e03030"/><path d="M6 16.5l4-6.5 2 2z" fill="#3a80e0"/><text x="8.6" y="7" font-size="6" font-family="Liberation Sans" font-weight="bold" fill="#333">N</text></svg>
<div class="a" style="left:1349px;top:87px;width:1px;height:437px;background:#e2e2e2"></div>
<div class="a" style="left:1332px;top:523px;width:18px;height:1px;background:#e6e6e6"></div>
<div class="a" style="left:1351px;top:524px;width:249px;height:1px;background:#9a9a9a"></div>
<div class="a" style="left:415px;top:520px;width:40px;height:1px;background:#d8d8d8"></div>
<div class="a" style="left:454px;top:86px;width:1px;height:435px;background:#b4b4b4"></div>
<div class="a" style="left:415px;top:524px;width:40px;height:1px;background:#dcdcdc"></div>
<svg class="a" style="left:4px;top:52px;" width="2" height="20" viewBox="0 0 2 20"><rect x="0" y="0" width="2" height="2" fill="#bbb"/><rect x="0" y="0" width="1.4" height="1.4" fill="#444"/><rect x="0" y="4" width="2" height="2" fill="#bbb"/><rect x="0" y="4" width="1.4" height="1.4" fill="#444"/><rect x="0" y="8" width="2" height="2" fill="#bbb"/><rect x="0" y="8" width="1.4" height="1.4" fill="#444"/><rect x="0" y="12" width="2" height="2" fill="#bbb"/><rect x="0" y="12" width="1.4" height="1.4" fill="#444"/><rect x="0" y="16" width="2" height="2" fill="#bbb"/><rect x="0" y="16" width="1.4" height="1.4" fill="#444"/></svg>
<svg class="a" style="left:16px;top:53px;" width="16" height="16" viewBox="0 0 16 16"><path d="M3 1h7l4 4v10H3z" fill="#f5f7fa" stroke="#2a3a4a"/><path d="M3 1h2v14H3z" fill="#0e1b2a"/><path d="M10 1v4h4" fill="#dfe6ee" stroke="#2a3a4a"/><path d="M2 5q4-3 8-2" stroke="#9ab" fill="none"/><path d="M6 8h6M6 10.5h4M6 13h6" stroke="#2e6aa8" stroke-width="1.2"/></svg>
<svg class="a" style="left:39px;top:60px;" width="6" height="4" viewBox="0 0 6 4"><path d="M0 0h6l-3 3z" fill="#111"/></svg>
<svg class="a" style="left:51px;top:53px;" width="16" height="16" viewBox="0 0 16 16"><path d="M1 4h5l1 1h6v9H1z" fill="#f0b830" stroke="#8a4a10"/><path d="M3 8h13l-3 6H1z" fill="#fcd860" stroke="#8a4a10"/><path d="M9 7l5-5M11 2h3v3" stroke="#e05010" stroke-width="2" fill="none"/></svg>
<svg class="a" style="left:75px;top:60px;" width="6" height="4" viewBox="0 0 6 4"><path d="M0 0h6l-3 3z" fill="#111"/></svg>
<svg class="a" style="left:88px;top:53px;" width="16" height="16" viewBox="0 0 16 16"><rect x="1" y="1" width="14" height="14" rx="1.5" fill="#2c5a8a" stroke="#173456"/><rect x="4" y="2" width="8" height="5" fill="#fff"/><rect x="4" y="10" width="8" height="5" fill="#c8d4e0"/></svg>
<div class="a" style="left:112px;top:54px;width:1px;height:16px;background:#c8c8c8"></div>
<svg class="a" style="left:121px;top:53px;" width="16" height="16" viewBox="0 0 16 16"><path d="M1 1h6l2 2v8H1z" fill="#fff" stroke="#556"/><path d="M6 5h6l2 2v8H6z" fill="#fff" stroke="#556"/><path d="M3 4h4M3 6h4M3 8h3M8 9h4M8 11h4M8 13h3" stroke="#3a78c0"/></svg>
<svg class="a" style="left:145px;top:53px;" width="16" height="16" viewBox="0 0 16 16"><rect x="1" y="3" width="10" height="12" fill="#e2e2e2" stroke="#c4c4c4"/><rect x="4" y="1" width="4" height="3" fill="#eee" stroke="#c4c4c4"/><path d="M7 7h6l2 2v6H7z" fill="#fafafa" stroke="#c4c4c4"/></svg>
<svg class="a" style="left:171px;top:60px;" width="6" height="4" viewBox="0 0 6 4"><path d="M0 0h6l-3 3z" fill="#aaa"/></svg>
<div class="a" style="left:181px;top:54px;width:1px;height:16px;background:#c8c8c8"></div>
<div class="a" style="left:186px;top:48px;width:25px;height:26px;background:#d9ecfb;border:1px solid #a6d2f4"></div>
<svg class="a" style="left:191px;top:53px;" width="16" height="16" viewBox="0 0 16 16"><text x="-0.5" y="8" font-size="9.5" font-weight="bold" font-family="Liberation Sans" fill="#2a6ad0">A</text><text x="0" y="16" font-size="9.5" font-weight="bold" font-family="Liberation Sans" fill="#555">Z</text><path d="M11.5 2v8" stroke="#b83a10" stroke-width="3"/><path d="M11.5 2v8" stroke="#f06a30" stroke-width="1.4"/><path d="M8 9.5h7l-3.5 5z" fill="#f06a30" stroke="#b83a10" stroke-width=".8"/></svg>
<svg class="a" style="left:216px;top:53px;" width="16" height="16" viewBox="0 0 16 16"><text x="0" y="8" font-size="9.5" font-weight="bold" font-family="Liberation Sans" fill="#2a6ad0">Z</text><text x="-0.5" y="16" font-size="9.5" font-weight="bold" font-family="Liberation Sans" fill="#555">A</text><path d="M11.5 2v8" stroke="#b83a10" stroke-width="3"/><path d="M11.5 2v8" stroke="#f06a30" stroke-width="1.4"/><path d="M8 9.5h7l-3.5 5z" fill="#f06a30" stroke="#b83a10" stroke-width=".8"/></svg>
<div class="a" style="left:240px;top:54px;width:1px;height:16px;background:#c8c8c8"></div>
<svg class="a" style="left:247px;top:53px;" width="16" height="16" viewBox="0 0 16 16"><rect x="1" y="4" width="12" height="11" fill="#f4f6f8" stroke="#667"/><rect x="1" y="4" width="12" height="2.5" fill="#3a78d0"/><path d="M3 9h2M3 12h2M6 9h5M6 12h4" stroke="#889"/><circle cx="12" cy="4" r="3.5" fill="#ffe040" stroke="#e8a000"/></svg>
<svg class="a" style="left:271px;top:60px;" width="6" height="4" viewBox="0 0 6 4"><path d="M0 0h6l-3 3z" fill="#111"/></svg>
<div class="a" style="left:283px;top:54px;width:1px;height:16px;background:#c8c8c8"></div>
<svg class="a" style="left:292px;top:53px;" width="16" height="16" viewBox="0 0 16 16"><defs><radialGradient id="hg" cx=".4" cy=".3" r=".7"><stop offset="0" stop-color="#4a7ad8"/><stop offset="1" stop-color="#1a3a90"/></radialGradient></defs><circle cx="8" cy="8" r="7.5" fill="url(#hg)" stroke="#16307a" stroke-width=".8"/><text x="4.2" y="12.8" font-size="12.5" font-weight="bold" font-family="Liberation Sans" fill="#fff">?</text></svg>
<div class="a" style="left:319px;top:49px;width:11px;height:25px;background:linear-gradient(to bottom,#f4f4f4,#8c8c8c)"></div>
<svg class="a" style="left:321px;top:67px;" width="7" height="4" viewBox="0 0 7 4"><path d="M0 0h7l-3.5 3.5z" fill="#111"/></svg>
<div class="a" style="left:330px;top:46px;width:1px;height:30px;background:#e8e8e8"></div>
<svg class="a" style="left:335px;top:52px;" width="2" height="20" viewBox="0 0 2 20"><rect x="0" y="0" width="2" height="2" fill="#bbb"/><rect x="0" y="0" width="1.4" height="1.4" fill="#444"/><rect x="0" y="4" width="2" height="2" fill="#bbb"/><rect x="0" y="4" width="1.4" height="1.4" fill="#444"/><rect x="0" y="8" width="2" height="2" fill="#bbb"/><rect x="0" y="8" width="1.4" height="1.4" fill="#444"/><rect x="0" y="12" width="2" height="2" fill="#bbb"/><rect x="0" y="12" width="1.4" height="1.4" fill="#444"/><rect x="0" y="16" width="2" height="2" fill="#bbb"/><rect x="0" y="16" width="1.4" height="1.4" fill="#444"/></svg>
<svg class="a" style="left:347px;top:53px;" width="16" height="16" viewBox="0 0 16 16"><path d="M1 3h5l1 2h7v10H1z" fill="#f0b830" stroke="#8a4a10"/><rect x="4" y="6" width="10" height="4" fill="#fff" stroke="#6a88b0"/><path d="M2 9h14l-2 6H1z" fill="#fcd860" stroke="#8a4a10"/></svg>
<svg class="a" style="left:372px;top:53px;" width="16" height="16" viewBox="0 0 16 16"><rect x="1" y="3" width="13" height="12" fill="#f4f6f8" stroke="#667"/><rect x="1" y="3" width="13" height="2.5" fill="#3a78d0"/><path d="M3 9h2M3 12h2" stroke="#889"/><path d="M6 13l8-8 2 2-8 8z" fill="#f8c840" stroke="#8a5a10"/><path d="M14 5l2 2" stroke="#e06070" stroke-width="2"/></svg>
<svg class="a" style="left:397px;top:53px;" width="16" height="16" viewBox="0 0 16 16"><rect x="1" y="3" width="13" height="12" fill="#f4f6f8" stroke="#667"/><rect x="1" y="3" width="13" height="2.5" fill="#3a78d0"/><path d="M3 9h2M3 12h2M6 12h5" stroke="#889"/><path d="M8 1l7 7M15 1l-7 7" stroke="#e01818" stroke-width="2.4"/></svg>
<svg class="a" style="left:43px;top:130px;" width="34" height="32" viewBox="0 0 34 32"><path d="M1 11L21 2l8 18-20 9z" fill="#eef0f2" stroke="#8a9098" stroke-width=".8"/><path d="M1 11L21 2l1.6 3.4-20 9z" fill="#3a72e0" stroke="#2a52b0" stroke-width=".6"/><path d="M4 16l3 7M7 14l3 7" stroke="#99a" stroke-width=".8" stroke-dasharray="1.5 1.5"/><rect x="9.5" y="9.5" width="24" height="21" fill="#f6f8fa" stroke="#707880"/><rect x="10" y="10" width="23" height="4" fill="#3a72e0"/><rect x="10" y="14" width="23" height="1" fill="#a8c4f0"/><rect x="13" y="18" width="4" height="1.2" fill="#707a84"/><rect x="13" y="21" width="4" height="1.2" fill="#707a84"/><rect x="13" y="24" width="4" height="1.2" fill="#707a84"/><rect x="13" y="27" width="4" height="1.2" fill="#707a84"/><rect x="19" y="18" width="4" height="1.2" fill="#707a84"/><rect x="19" y="21" width="4" height="1.2" fill="#707a84"/><rect x="19" y="24" width="4" height="1.2" fill="#707a84"/><rect x="19" y="27" width="4" height="1.2" fill="#707a84"/><rect x="25" y="18" width="4" height="1.2" fill="#707a84"/><rect x="25" y="21" width="4" height="1.2" fill="#707a84"/><rect x="25" y="24" width="4" height="1.2" fill="#707a84"/><rect x="25" y="27" width="4" height="1.2" fill="#707a84"/></svg>
<svg class="a" style="left:43px;top:269px;" width="34" height="32" viewBox="0 0 34 32"><path d="M1 11L21 2l8 18-20 9z" fill="#eef0f2" stroke="#8a9098" stroke-width=".8"/><path d="M1 11L21 2l1.6 3.4-20 9z" fill="#3a72e0" stroke="#2a52b0" stroke-width=".6"/><path d="M4 16l3 7M7 14l3 7" stroke="#99a" stroke-width=".8" stroke-dasharray="1.5 1.5"/><rect x="9.5" y="9.5" width="24" height="21" fill="#f6f8fa" stroke="#707880"/><rect x="10" y="10" width="23" height="4" fill="#3a72e0"/><rect x="10" y="14" width="23" height="1" fill="#a8c4f0"/><path d="M13.5 18.5h2v2M13.5 22.5h2v2M13.5 26.5h2v2" stroke="#777" fill="none" stroke-width=".9"/><path d="M18 19.5h11M18 23.5h11M18 27.5h11" stroke="#7a7a7a" stroke-width="1.1"/></svg>
<svg class="a" style="left:43px;top:199px;" width="34" height="34" viewBox="0 0 34 34"><rect x="6.5" y="2.5" width="19" height="17" fill="#f0f3f6" stroke="#80868c"/><path d="M9 6h13" stroke="#9aa0a8" stroke-width="1"/><path d="M9 9h13" stroke="#9aa0a8" stroke-width="1"/><path d="M9 12h13" stroke="#9aa0a8" stroke-width="1"/><path d="M9 15h13" stroke="#9aa0a8" stroke-width="1"/><rect x="2.5" y="13.5" width="19" height="18" fill="#f0f3f6" stroke="#80868c"/><path d="M5 17h13" stroke="#9aa0a8" stroke-width="1"/><path d="M5 20h13" stroke="#9aa0a8" stroke-width="1"/><path d="M5 23h13" stroke="#9aa0a8" stroke-width="1"/><path d="M5 26h13" stroke="#9aa0a8" stroke-width="1"/><rect x="12.5" y="7.5" width="19" height="18" fill="#f0f3f6" stroke="#80868c"/><path d="M15 11h13" stroke="#9aa0a8" stroke-width="1"/><path d="M15 14h13" stroke="#9aa0a8" stroke-width="1"/><path d="M15 17h13" stroke="#9aa0a8" stroke-width="1"/><path d="M15 20h13" stroke="#9aa0a8" stroke-width="1"/><path d="M14.5 16h6M14.5 19h6M14.5 22h6" stroke="#2a88d8" stroke-width="1.6"/></svg>
<svg class="a" style="left:43px;top:339px;" width="34" height="34" viewBox="0 0 34 34"><path d="M2 8l13-6 9 20-13 6z" fill="#f2f2f2" stroke="#8a8a8a" stroke-width=".8"/><path d="M5 10l5 11M8 8l5 11" stroke="#aaa" stroke-dasharray="1 1"/><rect x="12.5" y="5.5" width="19" height="26" fill="#f8f8f8" stroke="#7a7a7a"/><path d="M15 9h14M15 12h14M15 15h14M15 18h14M15 21h14M15 24h14M15 27h14" stroke="#8a8a8a"/></svg>
<svg class="a" style="left:152px;top:127px;" width="17" height="16" viewBox="0 0 17 16"><rect x="0.5" y="3.5" width="13" height="11" fill="#f4f6f8" stroke="#556"/><rect x="1" y="4" width="12" height="2" fill="#3a78d0"/><path d="M2 9h2M2 12h2M5 9h6M5 12h5" stroke="#889"/><circle cx="13" cy="4" r="3.5" fill="#ffe040" stroke="#f0a000"/></svg>
<svg class="a" style="left:152px;top:146px;" width="17" height="16" viewBox="0 0 17 16"><rect x="0.5" y="3.5" width="13" height="11" fill="#f4f6f8" stroke="#556"/><rect x="1" y="4" width="12" height="2" fill="#3a78d0"/><path d="M2 9h2M2 12h2" stroke="#889"/><path d="M5 6l11 10" stroke="#222" stroke-width="2"/><circle cx="5" cy="3" r="1.8" fill="#f8d020"/><circle cx="14" cy="6" r="1.3" fill="#f8d020"/></svg>
<svg class="a" style="left:152px;top:357px;" width="16" height="14" viewBox="0 0 16 14"><rect x="0.5" y="0.5" width="15" height="13" fill="#f0f2f4" stroke="#445"/><rect x="1" y="1" width="14" height="2.5" fill="#3a78d0"/><path d="M3 7h2M3 10h2M6 7h7M6 10h7" stroke="#556"/></svg>
<svg class="a" style="left:426px;top:7px;" width="14" height="16" viewBox="0 0 14 16"><path d="M1 1h8l4 4v10H1z" fill="#f5f7fa" stroke="#2a3a4a"/><path d="M1 1h2v14H1z" fill="#0e1b2a"/><path d="M0 6q4-4 9-3" stroke="#9ab" fill="none"/><path d="M5 8h6M5 10.5h4M5 13h6" stroke="#2e6aa8" stroke-width="1.1"/></svg>
<div class="a" style="left:1485px;top:15px;width:10px;height:1px;background:#111"></div>
<div class="a" style="left:1530px;top:10px;width:10px;height:10px;border:1px solid #111"></div>
<svg class="a" style="left:1576px;top:10px;" width="11" height="11" viewBox="0 0 11 11"><path d="M.5 .5l10 10M10.5 .5l-10 10" stroke="#111" stroke-width="1.1"/></svg>
<svg class="a" style="left:1566px;top:36px;" width="16" height="13" viewBox="0 0 16 13"><rect x="0.5" y="7.5" width="15" height="4.5" fill="#a8c8e8" stroke="#3a5a80"/><path d="M5 0h6v4h3l-6 6-6-6h3z" fill="#6ac020" stroke="#3a8010"/></svg>
<svg class="a" style="left:419px;top:61px;" width="2" height="20" viewBox="0 0 2 20"><rect x="0" y="0" width="2" height="2" fill="#bbb"/><rect x="0" y="0" width="1.4" height="1.4" fill="#444"/><rect x="0" y="4" width="2" height="2" fill="#bbb"/><rect x="0" y="4" width="1.4" height="1.4" fill="#444"/><rect x="0" y="8" width="2" height="2" fill="#bbb"/><rect x="0" y="8" width="1.4" height="1.4" fill="#444"/><rect x="0" y="12" width="2" height="2" fill="#bbb"/><rect x="0" y="12" width="1.4" height="1.4" fill="#444"/><rect x="0" y="16" width="2" height="2" fill="#bbb"/><rect x="0" y="16" width="1.4" height="1.4" fill="#444"/></svg>
<svg class="a" style="left:431px;top:62px;" width="16" height="16" viewBox="0 0 16 16"><path d="M3 1h7l4 4v10H3z" fill="#f5f7fa" stroke="#2a3a4a"/><path d="M3 1h2v14H3z" fill="#0e1b2a"/><path d="M10 1v4h4" fill="#dfe6ee" stroke="#2a3a4a"/><path d="M2 5q4-3 8-2" stroke="#9ab" fill="none"/><path d="M6 8h6M6 10.5h4M6 13h6" stroke="#2e6aa8" stroke-width="1.2"/></svg>
<svg class="a" style="left:454px;top:69px;" width="6" height="4" viewBox="0 0 6 4"><path d="M0 0h6l-3 3z" fill="#111"/></svg>
<svg class="a" style="left:466px;top:62px;" width="16" height="16" viewBox="0 0 16 16"><path d="M1 4h5l1 1h6v9H1z" fill="#f0b830" stroke="#8a4a10"/><path d="M3 8h13l-3 6H1z" fill="#fcd860" stroke="#8a4a10"/><path d="M9 7l5-5M11 2h3v3" stroke="#e05010" stroke-width="2" fill="none"/></svg>
<svg class="a" style="left:490px;top:69px;" width="6" height="4" viewBox="0 0 6 4"><path d="M0 0h6l-3 3z" fill="#111"/></svg>
<svg class="a" style="left:503px;top:62px;" width="16" height="16" viewBox="0 0 16 16"><rect x="1" y="1" width="14" height="14" rx="1.5" fill="#ddd" stroke="#bbb"/><rect x="4" y="2" width="8" height="5" fill="#fff"/><rect x="4" y="10" width="8" height="5" fill="#f2f2f2"/></svg>
<svg class="a" style="left:527px;top:62px;" width="18" height="16" viewBox="0 0 18 16"><rect x="1" y="4" width="12" height="8" fill="#fff" stroke="#4a5a70"/><path d="M1 4l6 5 6-5" stroke="#4a5a70" fill="none"/><path d="M10 12h4M12 10l3 2-3 2" stroke="#e08010" stroke-width="1.6" fill="none"/></svg>
<div class="a" style="left:552px;top:63px;width:1px;height:16px;background:#c8c8c8"></div>
<svg class="a" style="left:561px;top:62px;" width="16" height="16" viewBox="0 0 16 16"><path d="M2 2h9l3 3v10H2z" fill="#f8f8f8" stroke="#ccc"/><path d="M4 9h4M4 12h4" stroke="#ddd"/><path d="M7 11l7-7 2 2-7 7z" fill="#eee" stroke="#ccc"/></svg>
<div class="a" style="left:586px;top:63px;width:1px;height:16px;background:#c8c8c8"></div>
<svg class="a" style="left:595px;top:62px;" width="16" height="16" viewBox="0 0 16 16"><path d="M2 1h9l3 3v11H2z" fill="#fff" stroke="#b0b8c0"/><path d="M4 4h6M4 6h6" stroke="#3a70c0"/><rect x="1" y="9" width="14" height="6" fill="#e01c1c"/><text x="2.5" y="14" font-size="5" font-weight="bold" font-family="Liberation Sans" fill="#fff">PDF</text><path d="M11 1l3 3h-3z" fill="#e02020"/></svg>
<svg class="a" style="left:619px;top:62px;" width="16" height="16" viewBox="0 0 16 16"><rect x="4" y="1" width="8" height="7" fill="#fff" stroke="#3a5a80"/><path d="M5.5 3.5h5M5.5 5.5h5" stroke="#3a70c0"/><rect x="1" y="8" width="14" height="7" rx="1" fill="#3e4448" stroke="#1e2224"/><rect x="3" y="10" width="10" height="2" fill="#9aa"/><circle cx="12.5" cy="13" r=".8" fill="#4c4"/></svg>
<svg class="a" style="left:644px;top:62px;" width="16" height="16" viewBox="0 0 16 16"><path d="M2 2h8l3 3v10H2z" fill="#f4f4f4" stroke="#d0d0d0"/><circle cx="10" cy="7" r="3.5" fill="#fafafa" stroke="#ccc" stroke-width="1.4"/><path d="M12 9l3 4" stroke="#ccc" stroke-width="2"/></svg>
<div class="a" style="left:668px;top:63px;width:1px;height:16px;background:#c8c8c8"></div>
<svg class="a" style="left:677px;top:62px;" width="16" height="16" viewBox="0 0 16 16"><text x="0" y="7" font-size="7" font-family="Liberation Sans" fill="#bbb">ABC</text><path d="M4 10l3 4 6-7" stroke="#ccc" stroke-width="2" fill="none"/></svg>
<svg class="a" style="left:701px;top:62px;" width="16" height="16" viewBox="0 0 16 16"><text x="0" y="7" font-size="7" font-family="Liberation Sans" fill="#bbb">ABC</text><path d="M1 12q2-2 4 0t4 0 4 0 4 0" stroke="#ccc" stroke-width="1.3" fill="none"/></svg>
<div class="a" style="left:727px;top:63px;width:1px;height:16px;background:#c8c8c8"></div>
<svg class="a" style="left:735px;top:62px;" width="16" height="16" viewBox="0 0 16 16"><path d="M3 1l8 10M13 1L5 11" stroke="#c8c8c8" stroke-width="1.6"/><circle cx="4" cy="13" r="2.3" fill="none" stroke="#c8c8c8" stroke-width="1.4"/><circle cx="12" cy="13" r="2.3" fill="none" stroke="#c8c8c8" stroke-width="1.4"/></svg>
<svg class="a" style="left:760px;top:62px;" width="16" height="16" viewBox="0 0 16 16"><path d="M1 1h6l2 2v8H1z" fill="#fafafa" stroke="#ccc"/><path d="M6 5h6l2 2v8H6z" fill="#fafafa" stroke="#ccc"/><path d="M8 9h4M8 11h4M8 13h3" stroke="#ddd"/></svg>
<svg class="a" style="left:785px;top:62px;" width="16" height="16" viewBox="0 0 16 16"><rect x="1" y="3" width="10" height="12" fill="#e2e2e2" stroke="#c4c4c4"/><rect x="4" y="1" width="4" height="3" fill="#eee" stroke="#c4c4c4"/><path d="M7 7h6l2 2v6H7z" fill="#fafafa" stroke="#c4c4c4"/></svg>
<svg class="a" style="left:810px;top:62px;" width="16" height="16" viewBox="0 0 16 16"><path d="M10 6l4-5 1 1-4 5z" fill="#ddd" stroke="#c4c4c4"/><path d="M3 9l6-4 3 3-4 6z" fill="#e4e4e4" stroke="#c4c4c4"/><path d="M1 12l3-4 4 4-3 3z" fill="#eee" stroke="#c8c8c8"/></svg>
<div class="a" style="left:835px;top:63px;width:1px;height:16px;background:#c8c8c8"></div>
<svg class="a" style="left:842px;top:62px;" width="16" height="16" viewBox="0 0 16 16"><path d="M4 6a5 5 0 1 1 2 8" stroke="#ccc" stroke-width="2.6" fill="none"/><path d="M1 2v6h6z" fill="#ccc"/></svg>
<svg class="a" style="left:866px;top:69px;" width="6" height="4" viewBox="0 0 6 4"><path d="M0 0h6l-3 3z" fill="#999"/></svg>
<svg class="a" style="left:878px;top:62px;" width="16" height="16" viewBox="0 0 16 16"><path d="M12 6a5 5 0 1 0-2 8" stroke="#ccc" stroke-width="2.6" fill="none"/><path d="M15 2v6h-6z" fill="#ccc"/></svg>
<svg class="a" style="left:902px;top:69px;" width="6" height="4" viewBox="0 0 6 4"><path d="M0 0h6l-3 3z" fill="#999"/></svg>
<div class="a" style="left:914px;top:63px;width:1px;height:16px;background:#c8c8c8"></div>
<svg class="a" style="left:922px;top:62px;" width="16" height="16" viewBox="0 0 16 16"><circle cx="8" cy="8" r="7" fill="#e4e4e4" stroke="#ccc"/><path d="M3 5q5 3 10 0M3 11q5-3 10 0M5 8h6" stroke="#bbb" fill="none"/></svg>
<svg class="a" style="left:947px;top:62px;" width="16" height="16" viewBox="0 0 16 16"><rect x="1" y="2" width="14" height="12" fill="#fafafa" stroke="#ccc"/><path d="M1 5h14M1 8h14M1 11h14M5 2v12M10 2v12" stroke="#d2d2d2"/></svg>
<svg class="a" style="left:971px;top:69px;" width="6" height="4" viewBox="0 0 6 4"><path d="M0 0h6l-3 3z" fill="#999"/></svg>
<div class="a" style="left:980px;top:57px;width:25px;height:26px;background:#d9ecfb;border:1px solid #a6d2f4"></div>
<svg class="a" style="left:985px;top:62px;" width="16" height="16" viewBox="0 0 16 16"><path d="M1 12q3-6 5-2t3 1" stroke="#c8d4e0" fill="none"/><path d="M6 12l7-7 2 2-7 7z" fill="#eef" stroke="#c0c8d0"/></svg>
<div class="a" style="left:1008px;top:63px;width:1px;height:16px;background:#c8c8c8"></div>
<svg class="a" style="left:1017px;top:62px;" width="16" height="16" viewBox="0 0 16 16"><rect x="2" y="1" width="4" height="4" fill="#222"/><rect x="10" y="1" width="4" height="4" fill="#222"/><rect x="1" y="5" width="6" height="10" rx="1" fill="#2a2a2a"/><rect x="9" y="5" width="6" height="10" rx="1" fill="#2a2a2a"/><rect x="6" y="6" width="4" height="4" fill="#333"/><path d="M2 8h4M10 8h4M2 11h4M10 11h4" stroke="#888"/></svg>
<svg class="a" style="left:1042px;top:62px;" width="16" height="16" viewBox="0 0 16 16"><circle cx="8" cy="8" r="7" fill="#fff" stroke="#4a5a6a" stroke-width="1.2"/><path d="M12 4L9 9 7 7z" fill="#2060e0"/><path d="M4 12l3-5 2 2z" fill="#e02020"/></svg>
<svg class="a" style="left:1067px;top:62px;" width="16" height="16" viewBox="0 0 16 16"><rect x="1" y="4" width="14" height="11" fill="#eee" stroke="#ccc"/><path d="M5 4l3-3 3 3" stroke="#ccc" fill="none"/><path d="M3 13l4-3 3 2 3-2" stroke="#d4d4d4" fill="none"/></svg>
<svg class="a" style="left:1092px;top:62px;" width="16" height="16" viewBox="0 0 16 16"><ellipse cx="8" cy="3" rx="6" ry="2.2" fill="#e8ecf0" stroke="#444"/><path d="M2 3v10c0 1.2 2.7 2.2 6 2.2s6-1 6-2.2V3" fill="#b8bcc0" stroke="#444"/><path d="M2 6.5c0 1.2 2.7 2.2 6 2.2s6-1 6-2.2M2 10c0 1.2 2.7 2.2 6 2.2s6-1 6-2.2" stroke="#444" fill="none"/><path d="M4 8v1M4 11.5v1M4 5v1" stroke="#fff" stroke-width="1.2"/></svg>
<svg class="a" style="left:1117px;top:62px;" width="16" height="16" viewBox="0 0 16 16"><path d="M7 2h7M9 2v13M12 2v13" stroke="#ccc" stroke-width="1.5"/><path d="M8 2a3.5 3.5 0 0 0 0 7z" fill="#ccc"/></svg>
<svg class="a" style="left:1142px;top:62px;" width="16" height="16" viewBox="0 0 16 16"><circle cx="6" cy="6" r="4.5" fill="#dbeaf8" stroke="#333" stroke-width="1.4"/><path d="M9.5 9.5l5 5" stroke="#c8901a" stroke-width="2.6"/></svg>
<div class="a" style="left:1166px;top:63px;width:1px;height:16px;background:#c8c8c8"></div>
<svg class="a" style="left:1175px;top:62px;" width="16" height="16" viewBox="0 0 16 16"><defs><radialGradient id="hg" cx=".4" cy=".3" r=".7"><stop offset="0" stop-color="#4a7ad8"/><stop offset="1" stop-color="#1a3a90"/></radialGradient></defs><circle cx="8" cy="8" r="7.5" fill="url(#hg)" stroke="#16307a" stroke-width=".8"/><text x="4.2" y="12.8" font-size="12.5" font-weight="bold" font-family="Liberation Sans" fill="#fff">?</text></svg>
<div class="a" style="left:1202px;top:58px;width:11px;height:25px;background:linear-gradient(to bottom,#f4f4f4,#8c8c8c)"></div>
<svg class="a" style="left:1204px;top:76px;" width="7" height="4" viewBox="0 0 7 4"><path d="M0 0h7l-3.5 3.5z" fill="#111"/></svg>
<div class="a" style="left:1213px;top:55px;width:1px;height:30px;background:#e8e8e8"></div>
<svg class="a" style="left:423px;top:89px;" width="28" height="2" viewBox="0 0 28 2"><rect x="0" y="0" width="2" height="2" fill="#777"/><rect x="4" y="0" width="2" height="2" fill="#777"/><rect x="8" y="0" width="2" height="2" fill="#777"/><rect x="12" y="0" width="2" height="2" fill="#777"/><rect x="16" y="0" width="2" height="2" fill="#777"/><rect x="20" y="0" width="2" height="2" fill="#777"/><rect x="24" y="0" width="2" height="2" fill="#777"/></svg>
<svg class="a" style="left:426px;top:102px;" width="16" height="16" viewBox="0 0 16 16"><path d="M3 1v12l3-3 2 5 2-1-2-5h4z" fill="#fff" stroke="#bbb"/></svg>
<svg class="a" style="left:426px;top:129px;" width="16" height="16" viewBox="0 0 16 16"><path d="M1 15h14M1 15V3l8 8" stroke="#ccc" fill="none"/><path d="M6 11l7-7 2 2-7 7z" fill="#eee" stroke="#c4c4c4"/></svg>
<svg class="a" style="left:426px;top:156px;" width="16" height="16" viewBox="0 0 16 16"><rect x="5" y="1" width="9" height="6" rx="1" fill="#fafafa" stroke="#ccc"/><rect x="1" y="6" width="8" height="9" fill="#f4f4f4" stroke="#ccc"/><path d="M5 8v6M3 10h4" stroke="#bbb"/><circle cx="12" cy="12" r="2.3" fill="#fff" stroke="#ccc"/></svg>
<svg class="a" style="left:426px;top:184px;" width="16" height="16" viewBox="0 0 16 16"><rect x="1" y="1" width="12" height="12" fill="#fafafa" stroke="#ccc"/><path d="M1 4h12M3 7h2v5" stroke="#ccc" fill="none"/><rect x="7" y="7" width="8" height="8" fill="#f4f4f4" stroke="#ccc"/><path d="M11 8v6M9 10h4" stroke="#bbb"/></svg>
<svg class="a" style="left:426px;top:211px;" width="16" height="16" viewBox="0 0 16 16"><rect x="1.5" y="1.5" width="13" height="13" fill="#fafafa" stroke="#ccc"/><rect x="3.5" y="3.5" width="9" height="9" fill="#fff" stroke="#ddd"/><path d="M5 8l2 2 4-5" stroke="#bbb" stroke-width="1.2" fill="none"/></svg>
<svg class="a" style="left:426px;top:238px;" width="16" height="16" viewBox="0 0 16 16"><rect x="0.5" y="3.5" width="15" height="9" fill="#fafafa" stroke="#ccc"/><text x="2" y="11" font-size="6.5" font-family="Liberation Sans" fill="#aaa">ABC</text></svg>
<svg class="a" style="left:426px;top:264px;" width="16" height="16" viewBox="0 0 16 16"><rect x="0.5" y="2.5" width="15" height="11" fill="#fafafa" stroke="#ccc"/><rect x="2.5" y="4.5" width="11" height="7" fill="#fff" stroke="#ddd"/><text x="4" y="10.5" font-size="6" font-family="Liberation Sans" fill="#aaa">#.</text></svg>
<svg class="a" style="left:426px;top:292px;" width="16" height="16" viewBox="0 0 16 16"><rect x="0.5" y="2.5" width="15" height="11" rx="4" fill="#f6f6f6" stroke="#ccc"/></svg>
<svg class="a" style="left:426px;top:319px;" width="16" height="16" viewBox="0 0 16 16"><circle cx="8" cy="8" r="4" fill="#fafafa" stroke="#ccc"/><circle cx="8" cy="8" r="1.8" fill="#c4c4c4"/></svg>
<svg class="a" style="left:426px;top:346px;" width="16" height="16" viewBox="0 0 16 16"><rect x="0.5" y="0.5" width="15" height="15" fill="#fafafa" stroke="#ccc"/><path d="M2 3h7M2 6h7M2 9h7M2 12h5" stroke="#ccc"/><rect x="11.5" y="0.5" width="4" height="15" fill="#f2f2f2" stroke="#ccc"/></svg>
<svg class="a" style="left:426px;top:373px;" width="16" height="16" viewBox="0 0 16 16"><rect x="0.5" y="0.5" width="15" height="15" fill="#fafafa" stroke="#ccc"/><rect x="0.5" y="0.5" width="15" height="4" fill="#fafafa" stroke="#ccc"/><path d="M2 8h7M2 11h7M2 14h5" stroke="#ccc"/><rect x="11.5" y="5.5" width="4" height="10" fill="#f2f2f2" stroke="#ccc"/></svg>
<svg class="a" style="left:426px;top:401px;" width="16" height="16" viewBox="0 0 16 16"><text x="0" y="12" font-size="8" font-family="Liberation Sans" fill="#aaa">ABC</text></svg>
<svg class="a" style="left:426px;top:428px;" width="16" height="16" viewBox="0 0 16 16"><circle cx="3" cy="5" r="2" fill="none" stroke="#ccc"/><rect x="7.5" y="2.5" width="7" height="6" rx="1.5" fill="#fafafa" stroke="#ccc"/><path d="M2 13h1M7 13h1M12 13h1" stroke="#bbb" stroke-width="1.5"/></svg>
<svg class="a" style="left:426px;top:454px;" width="16" height="16" viewBox="0 0 16 16"><rect x="0.5" y="1.5" width="15" height="13" fill="#f4f4f4" stroke="#ccc"/><path d="M1 5h14M1 7l8 7" stroke="#ccc"/><path d="M9 9h5M9 11h5" stroke="#ddd"/></svg>
<svg class="a" style="left:426px;top:481px;" width="16" height="16" viewBox="0 0 16 16"><path d="M3 5l11 10" stroke="#222" stroke-width="2.2"/><path d="M4 1l1 2 2 1-2 1-1 2-1-2-2-1 2-1z" fill="#f0c020"/><path d="M11 1l.7 1.3 1.3.7-1.3.7L11 5l-.7-1.3L9 3l1.3-.7z" fill="#f0c020"/><circle cx="5" cy="11" r="3" fill="#ddd" stroke="#666"/></svg>
<div class="a" style="left:418px;top:509px;width:34px;height:10px;background:linear-gradient(to right,#f8f8f8,#9a9a9a)"></div>
<svg class="a" style="left:445px;top:511px;" width="4" height="6" viewBox="0 0 4 6"><path d="M0 0l4 3-4 3z" fill="#111"/></svg>
<svg class="a" style="left:419px;top:531px;" width="2" height="20" viewBox="0 0 2 20"><rect x="0" y="0" width="2" height="2" fill="#bbb"/><rect x="0" y="0" width="1.4" height="1.4" fill="#444"/><rect x="0" y="4" width="2" height="2" fill="#bbb"/><rect x="0" y="4" width="1.4" height="1.4" fill="#444"/><rect x="0" y="8" width="2" height="2" fill="#bbb"/><rect x="0" y="8" width="1.4" height="1.4" fill="#444"/><rect x="0" y="12" width="2" height="2" fill="#bbb"/><rect x="0" y="12" width="1.4" height="1.4" fill="#444"/><rect x="0" y="16" width="2" height="2" fill="#bbb"/><rect x="0" y="16" width="1.4" height="1.4" fill="#444"/></svg>
<svg class="a" style="left:431px;top:532px;" width="16" height="16" viewBox="0 0 16 16"><rect x="2" y="1" width="4" height="4" fill="#222"/><rect x="10" y="1" width="4" height="4" fill="#222"/><rect x="1" y="5" width="6" height="10" rx="1" fill="#2a2a2a"/><rect x="9" y="5" width="6" height="10" rx="1" fill="#2a2a2a"/><rect x="6" y="6" width="4" height="4" fill="#333"/><path d="M2 8h4M10 8h4M2 11h4M10 11h4" stroke="#888"/></svg>
<svg class="a" style="left:672px;top:532px;" width="16" height="16" viewBox="0 0 16 16"><path d="M2 3v10" stroke="#bbb" stroke-width="1.5"/><path d="M12 3v10L5 8z" fill="none" stroke="#bbb"/></svg>
<svg class="a" style="left:697px;top:532px;" width="16" height="16" viewBox="0 0 16 16"><path d="M11 3v10L4 8z" fill="none" stroke="#bbb"/></svg>
<svg class="a" style="left:722px;top:532px;" width="16" height="16" viewBox="0 0 16 16"><path d="M4 3v10l7-5z" fill="#b8d0f0" stroke="#1a4a90" stroke-width="1.2"/></svg>
<svg class="a" style="left:747px;top:532px;" width="16" height="16" viewBox="0 0 16 16"><path d="M3 3v10l7-5z" fill="#b8d0f0" stroke="#1a4a90" stroke-width="1.2"/><path d="M13 3v10" stroke="#1a4a90" stroke-width="1.8"/></svg>
<div class="a" style="left:770px;top:532px;width:1px;height:16px;background:#c8c8c8"></div>
<svg class="a" style="left:779px;top:532px;" width="16" height="16" viewBox="0 0 16 16"><rect x="1" y="1" width="14" height="14" rx="1.5" fill="#ddd" stroke="#bbb"/><rect x="4" y="2" width="8" height="5" fill="#fff"/><rect x="4" y="10" width="8" height="5" fill="#f2f2f2"/></svg>
<svg class="a" style="left:804px;top:532px;" width="16" height="16" viewBox="0 0 16 16"><path d="M5 4a5 5 0 1 1 0 9" stroke="#ccc" stroke-width="2.4" fill="none"/><path d="M2 1v6h6z" fill="#ddd" stroke="#ccc"/><rect x="1" y="2" width="3" height="12" fill="#ddd"/></svg>
<svg class="a" style="left:829px;top:532px;" width="16" height="16" viewBox="0 0 16 16"><path d="M2 2l12 12M14 2L2 14" stroke="#ccc" stroke-width="2.2"/><path d="M1 5h9" stroke="#ddd" stroke-width="2"/></svg>
<div class="a" style="left:853px;top:532px;width:1px;height:16px;background:#c8c8c8"></div>
<svg class="a" style="left:860px;top:532px;" width="16" height="16" viewBox="0 0 16 16"><rect x="1" y="4" width="10" height="9" fill="#eee" stroke="#ccc"/><path d="M6 3a5 5 0 0 1 9 2M15 1v4h-4" stroke="#c4c4c4" stroke-width="1.6" fill="none"/></svg>
<div class="a" style="left:886px;top:532px;width:1px;height:16px;background:#c8c8c8"></div>
<svg class="a" style="left:897px;top:532px;" width="16" height="16" viewBox="0 0 16 16"><text x="3" y="8" font-size="9.5" font-weight="bold" font-family="Liberation Sans" fill="#2a6ad0">A</text><text x="3.5" y="16" font-size="9.5" font-weight="bold" font-family="Liberation Sans" fill="#555">Z</text></svg>
<svg class="a" style="left:920px;top:532px;" width="16" height="16" viewBox="0 0 16 16"><text x="-0.5" y="8" font-size="9.5" font-weight="bold" font-family="Liberation Sans" fill="#2a6ad0">A</text><text x="0" y="16" font-size="9.5" font-weight="bold" font-family="Liberation Sans" fill="#555">Z</text><path d="M11.5 2v8" stroke="#b83a10" stroke-width="3"/><path d="M11.5 2v8" stroke="#f06a30" stroke-width="1.4"/><path d="M8 9.5h7l-3.5 5z" fill="#f06a30" stroke="#b83a10" stroke-width=".8"/></svg>
<svg class="a" style="left:945px;top:532px;" width="16" height="16" viewBox="0 0 16 16"><text x="0" y="8" font-size="9.5" font-weight="bold" font-family="Liberation Sans" fill="#2a6ad0">Z</text><text x="-0.5" y="16" font-size="9.5" font-weight="bold" font-family="Liberation Sans" fill="#555">A</text><path d="M11.5 2v8" stroke="#b83a10" stroke-width="3"/><path d="M11.5 2v8" stroke="#f06a30" stroke-width="1.4"/><path d="M8 9.5h7l-3.5 5z" fill="#f06a30" stroke="#b83a10" stroke-width=".8"/></svg>
<div class="a" style="left:969px;top:532px;width:1px;height:16px;background:#c8c8c8"></div>
<svg class="a" style="left:978px;top:532px;" width="16" height="16" viewBox="0 0 16 16"><path d="M3 5l11 10" stroke="#222" stroke-width="2.2"/><path d="M4 1l1 2 2 1-2 1-1 2-1-2-2-1 2-1z" fill="#f0c020"/><path d="M11 1l.7 1.3 1.3.7-1.3.7L11 5l-.7-1.3L9 3l1.3-.7z" fill="#f0c020"/><circle cx="5" cy="11" r="3" fill="#ddd" stroke="#666"/></svg>
<svg class="a" style="left:1003px;top:532px;" width="16" height="16" viewBox="0 0 16 16"><path d="M1 3h12l-4 6v5l-3 1V9z" fill="#f2f2f2" stroke="#c4c4c4"/><path d="M9 8l2 2 5-7" stroke="#ccc" stroke-width="1.5" fill="none"/></svg>
<svg class="a" style="left:1028px;top:532px;" width="16" height="16" viewBox="0 0 16 16"><rect x="3" y="1" width="12" height="8" fill="#fff" stroke="#3a5a90"/><rect x="3" y="1" width="12" height="2" fill="#3a78c0"/><path d="M5 5h6" stroke="#666"/><path d="M1 6h10l-3 5v4l-3 1v-5z" fill="#e8eef6" stroke="#2a4a7a"/></svg>
<svg class="a" style="left:1053px;top:532px;" width="16" height="16" viewBox="0 0 16 16"><path d="M1 3h12l-4 6v5l-3 1V9z" fill="#f2f2f2" stroke="#c8c8c8"/><path d="M8 1l7 7M15 1L8 8" stroke="#c4c4c4" stroke-width="1.8"/></svg>
<div class="a" style="left:1077px;top:532px;width:1px;height:16px;background:#c8c8c8"></div>
<svg class="a" style="left:1086px;top:532px;" width="16" height="16" viewBox="0 0 16 16"><rect x="1" y="1" width="10" height="9" fill="#fff" stroke="#3a5a90"/><rect x="1" y="1" width="10" height="2" fill="#3a78c0"/><rect x="4" y="6" width="12" height="9" fill="#fff" stroke="#445"/><path d="M4 9h12M4 12h12M8 6v9M12 6v9" stroke="#667"/></svg>
<div class="a" style="left:1113px;top:528px;width:11px;height:25px;background:linear-gradient(to bottom,#f4f4f4,#8c8c8c)"></div>
<svg class="a" style="left:1115px;top:546px;" width="7" height="4" viewBox="0 0 7 4"><path d="M0 0h7l-3.5 3.5z" fill="#111"/></svg>
<svg class="a" style="left:419px;top:562px;" width="2" height="20" viewBox="0 0 2 20"><rect x="0" y="0" width="2" height="2" fill="#bbb"/><rect x="0" y="0" width="1.4" height="1.4" fill="#444"/><rect x="0" y="4" width="2" height="2" fill="#bbb"/><rect x="0" y="4" width="1.4" height="1.4" fill="#444"/><rect x="0" y="8" width="2" height="2" fill="#bbb"/><rect x="0" y="8" width="1.4" height="1.4" fill="#444"/><rect x="0" y="12" width="2" height="2" fill="#bbb"/><rect x="0" y="12" width="1.4" height="1.4" fill="#444"/><rect x="0" y="16" width="2" height="2" fill="#bbb"/><rect x="0" y="16" width="1.4" height="1.4" fill="#444"/></svg>
<svg class="a" style="left:432px;top:563px;" width="16" height="16" viewBox="0 0 16 16"><path d="M3 1v12l3-3 2 5 2-1-2-5h4z" fill="#fff" stroke="#bbb"/></svg>
<svg class="a" style="left:455px;top:563px;" width="16" height="16" viewBox="0 0 16 16"><path d="M1 15h14M1 15V3l8 8" stroke="#ccc" fill="none"/><path d="M6 11l7-7 2 2-7 7z" fill="#eee" stroke="#c4c4c4"/></svg>
<div class="a" style="left:480px;top:563px;width:1px;height:16px;background:#c8c8c8"></div>
<svg class="a" style="left:489px;top:563px;" width="16" height="16" viewBox="0 0 16 16"><rect x="5" y="1" width="9" height="6" rx="1" fill="#fafafa" stroke="#ccc"/><rect x="1" y="6" width="8" height="9" fill="#f4f4f4" stroke="#ccc"/><path d="M5 8v6M3 10h4" stroke="#bbb"/><circle cx="12" cy="12" r="2.3" fill="#fff" stroke="#ccc"/></svg>
<svg class="a" style="left:513px;top:563px;" width="16" height="16" viewBox="0 0 16 16"><rect x="1" y="1" width="12" height="12" fill="#fafafa" stroke="#ccc"/><path d="M1 4h12M3 7h2v5" stroke="#ccc" fill="none"/><rect x="7" y="7" width="8" height="8" fill="#f4f4f4" stroke="#ccc"/><path d="M11 8v6M9 10h4" stroke="#bbb"/></svg>
<div class="a" style="left:538px;top:563px;width:1px;height:16px;background:#c8c8c8"></div>
<svg class="a" style="left:547px;top:563px;" width="16" height="16" viewBox="0 0 16 16"><rect x="1" y="3" width="12" height="11" fill="#fafafa" stroke="#ccc"/><path d="M1 6h12M3 9h2M3 12h5" stroke="#ccc"/><path d="M7 12l6-7 2 2-6 6z" fill="#eee" stroke="#ccc"/></svg>
<svg class="a" style="left:571px;top:563px;" width="16" height="16" viewBox="0 0 16 16"><rect x="1" y="2" width="14" height="12" fill="#fafafa" stroke="#ccc"/><path d="M1 6h14M1 10h14M6 2v12M11 2v12" stroke="#d4d4d4"/><rect x="6" y="6" width="5" height="4" fill="#e4e4e4"/></svg>
<svg class="a" style="left:596px;top:563px;" width="16" height="16" viewBox="0 0 16 16"><rect x="2" y="1" width="6" height="6" fill="#fafafa" stroke="#ccc"/><path d="M3 4l2 2 3-4" stroke="#ccc" fill="none"/><path d="M4 9q0 4 6 4" stroke="#ccc" stroke-width="1.5" fill="none"/><circle cx="13" cy="13" r="2" fill="#fff" stroke="#ccc"/></svg>
<div class="a" style="left:621px;top:563px;width:1px;height:16px;background:#c8c8c8"></div>
<svg class="a" style="left:629px;top:563px;" width="16" height="16" viewBox="0 0 16 16"><path d="M1 4h5l1 1h6v10H1z" fill="#f0b830" stroke="#8a4a10"/><path d="M4 4v10M4 6h2M4 9h2M4 12h2" stroke="#fff" stroke-width=".8"/><path d="M3 9h13l-3 6H1z" fill="#fcd860" stroke="#8a4a10"/><path d="M7 11l7-8 2 2-7 7z" fill="#f8d050" stroke="#6a4010"/><path d="M14 3l2 2" stroke="#e06070" stroke-width="2"/></svg>
<svg class="a" style="left:655px;top:563px;" width="16" height="16" viewBox="0 0 16 16"><rect x="1" y="2" width="14" height="12" fill="#fff" stroke="#2a3a5a" stroke-width="1.4"/><rect x="3" y="4" width="3" height="8" fill="#fff" stroke="#333"/><path d="M8 6l1 8 2-2 3 3 1-1-3-3 2-1z" fill="#fff" stroke="#111"/></svg>
<div class="a" style="left:679px;top:563px;width:1px;height:16px;background:#c8c8c8"></div>
<svg class="a" style="left:688px;top:563px;" width="16" height="16" viewBox="0 0 16 16"><path d="M8 1v14M1 8h14M5 4l3-3 3 3M5 12l3 3 3-3M4 5L1 8l3 3" stroke="#ccc" fill="none"/><rect x="2" y="2" width="5" height="12" fill="none" stroke="#ddd"/></svg>
<svg class="a" style="left:712px;top:563px;" width="16" height="16" viewBox="0 0 16 16"><circle cx="8" cy="3" r="1.8" fill="none" stroke="#bbb"/><path d="M8 5v10M4 7h8M2 10q1 5 6 5t6-5" stroke="#bbb" stroke-width="1.3" fill="none"/></svg>
<svg class="a" style="left:735px;top:570px;" width="6" height="4" viewBox="0 0 6 4"><path d="M0 0h6l-3 3z" fill="#999"/></svg>
<div class="a" style="left:748px;top:563px;width:1px;height:16px;background:#c8c8c8"></div>
<svg class="a" style="left:757px;top:563px;" width="16" height="16" viewBox="0 0 16 16"><rect x="1" y="6" width="9" height="9" fill="#f0f0f0" stroke="#c4c4c4"/><rect x="6" y="1" width="9" height="9" fill="#e4e4e4" stroke="#c4c4c4"/></svg>
<svg class="a" style="left:781px;top:563px;" width="16" height="16" viewBox="0 0 16 16"><rect x="6" y="1" width="9" height="9" fill="#f0f0f0" stroke="#c4c4c4"/><rect x="1" y="6" width="9" height="9" fill="#dcdcdc" stroke="#c4c4c4"/></svg>
<div class="a" style="left:806px;top:563px;width:1px;height:16px;background:#c8c8c8"></div>
<svg class="a" style="left:813px;top:563px;" width="16" height="16" viewBox="0 0 16 16"><path d="M1 1v14" stroke="#bbb" stroke-width="1.5"/><rect x="3" y="5" width="6" height="6" fill="#eee" stroke="#ccc"/><path d="M9 8h6M12 6l-2 2 2 2" stroke="#ccc" fill="none"/></svg>
<svg class="a" style="left:837px;top:570px;" width="6" height="4" viewBox="0 0 6 4"><path d="M0 0h6l-3 3z" fill="#999"/></svg>
<div class="a" style="left:850px;top:563px;width:1px;height:16px;background:#c8c8c8"></div>
<svg class="a" style="left:858px;top:563px;" width="16" height="16" viewBox="0 0 16 16"><rect x="1" y="1" width="1" height="1" fill="#c4c4c4"/><rect x="1" y="4" width="1" height="1" fill="#c4c4c4"/><rect x="1" y="7" width="1" height="1" fill="#c4c4c4"/><rect x="1" y="10" width="1" height="1" fill="#c4c4c4"/><rect x="1" y="13" width="1" height="1" fill="#c4c4c4"/><rect x="4" y="1" width="1" height="1" fill="#c4c4c4"/><rect x="4" y="4" width="1" height="1" fill="#c4c4c4"/><rect x="4" y="7" width="1" height="1" fill="#c4c4c4"/><rect x="4" y="10" width="1" height="1" fill="#c4c4c4"/><rect x="4" y="13" width="1" height="1" fill="#c4c4c4"/><rect x="7" y="1" width="1" height="1" fill="#c4c4c4"/><rect x="7" y="4" width="1" height="1" fill="#c4c4c4"/><rect x="7" y="7" width="1" height="1" fill="#c4c4c4"/><rect x="7" y="10" width="1" height="1" fill="#c4c4c4"/><rect x="7" y="13" width="1" height="1" fill="#c4c4c4"/><rect x="10" y="1" width="1" height="1" fill="#c4c4c4"/><rect x="10" y="4" width="1" height="1" fill="#c4c4c4"/><rect x="10" y="7" width="1" height="1" fill="#c4c4c4"/><rect x="10" y="10" width="1" height="1" fill="#c4c4c4"/><rect x="10" y="13" width="1" height="1" fill="#c4c4c4"/><rect x="13" y="1" width="1" height="1" fill="#c4c4c4"/><rect x="13" y="4" width="1" height="1" fill="#c4c4c4"/><rect x="13" y="7" width="1" height="1" fill="#c4c4c4"/><rect x="13" y="10" width="1" height="1" fill="#c4c4c4"/><rect x="13" y="13" width="1" height="1" fill="#c4c4c4"/></svg>
<svg class="a" style="left:882px;top:563px;" width="16" height="16" viewBox="0 0 16 16"><rect x="1" y="1" width="1" height="1" fill="#c4c4c4"/><rect x="1" y="4" width="1" height="1" fill="#c4c4c4"/><rect x="1" y="7" width="1" height="1" fill="#c4c4c4"/><rect x="1" y="10" width="1" height="1" fill="#c4c4c4"/><rect x="1" y="13" width="1" height="1" fill="#c4c4c4"/><rect x="4" y="1" width="1" height="1" fill="#c4c4c4"/><rect x="4" y="4" width="1" height="1" fill="#c4c4c4"/><rect x="4" y="7" width="1" height="1" fill="#c4c4c4"/><rect x="4" y="10" width="1" height="1" fill="#c4c4c4"/><rect x="4" y="13" width="1" height="1" fill="#c4c4c4"/><rect x="7" y="1" width="1" height="1" fill="#c4c4c4"/><rect x="7" y="4" width="1" height="1" fill="#c4c4c4"/><rect x="7" y="7" width="1" height="1" fill="#c4c4c4"/><rect x="7" y="10" width="1" height="1" fill="#c4c4c4"/><rect x="7" y="13" width="1" height="1" fill="#c4c4c4"/><rect x="10" y="1" width="1" height="1" fill="#c4c4c4"/><rect x="10" y="4" width="1" height="1" fill="#c4c4c4"/><rect x="10" y="7" width="1" height="1" fill="#c4c4c4"/><rect x="10" y="10" width="1" height="1" fill="#c4c4c4"/><rect x="10" y="13" width="1" height="1" fill="#c4c4c4"/><rect x="13" y="1" width="1" height="1" fill="#c4c4c4"/><rect x="13" y="4" width="1" height="1" fill="#c4c4c4"/><rect x="13" y="7" width="1" height="1" fill="#c4c4c4"/><rect x="13" y="10" width="1" height="1" fill="#c4c4c4"/><rect x="13" y="13" width="1" height="1" fill="#c4c4c4"/><path d="M7 5a2 2 0 1 1 4 0v4H7z" fill="#eee" stroke="#bbb"/></svg>
<svg class="a" style="left:907px;top:563px;" width="16" height="16" viewBox="0 0 16 16"><path d="M1 5h14M1 11h14M5 1v14M11 1v14" stroke="#bbb" stroke-width="1.3"/></svg>
<div class="a" style="left:935px;top:557px;width:11px;height:26px;background:linear-gradient(to bottom,#f4f4f4,#8c8c8c)"></div>
<svg class="a" style="left:937px;top:576px;" width="7" height="4" viewBox="0 0 7 4"><path d="M0 0h7l-3.5 3.5z" fill="#111"/></svg>
<div class="a" style="left:946px;top:556px;width:1px;height:31px;background:#e8e8e8"></div>
<svg class="a" style="left:951px;top:562px;" width="2" height="20" viewBox="0 0 2 20"><rect x="0" y="0" width="2" height="2" fill="#bbb"/><rect x="0" y="0" width="1.4" height="1.4" fill="#444"/><rect x="0" y="4" width="2" height="2" fill="#bbb"/><rect x="0" y="4" width="1.4" height="1.4" fill="#444"/><rect x="0" y="8" width="2" height="2" fill="#bbb"/><rect x="0" y="8" width="1.4" height="1.4" fill="#444"/><rect x="0" y="12" width="2" height="2" fill="#bbb"/><rect x="0" y="12" width="1.4" height="1.4" fill="#444"/><rect x="0" y="16" width="2" height="2" fill="#bbb"/><rect x="0" y="16" width="1.4" height="1.4" fill="#444"/></svg>
<svg class="a" style="left:966px;top:563px;" width="16" height="16" viewBox="0 0 16 16"><path d="M3 1v12l3-3 2 5 2-1-2-5h4z" fill="#fff" stroke="#bbb"/></svg>
<div class="a" style="left:987px;top:563px;width:1px;height:16px;background:#c8c8c8"></div>
<svg class="a" style="left:996px;top:563px;" width="16" height="16" viewBox="0 0 16 16"><path d="M1 15L15 1" stroke="#2a62c0" stroke-width="1.6"/></svg>
<svg class="a" style="left:1022px;top:563px;" width="17" height="16" viewBox="0 0 17 16"><rect x="1" y="3" width="15" height="10" fill="#2a70d8" stroke="#163a78"/><rect x="2" y="4" width="13" height="3" fill="#5a9aec"/></svg>
<svg class="a" style="left:1047px;top:563px;" width="17" height="16" viewBox="0 0 17 16"><ellipse cx="8.5" cy="8" rx="7.5" ry="5" fill="#2a70d8" stroke="#163a78"/><ellipse cx="8.5" cy="6" rx="5" ry="2" fill="#6aa8f0"/></svg>
<svg class="a" style="left:1072px;top:563px;" width="16" height="16" viewBox="0 0 16 16"><path d="M1 13q3 3 7-1t6 1" stroke="#1a50b0" stroke-width="1.6" fill="none"/><path d="M5 11l8-9 3 2-8 9z" fill="#f8c030" stroke="#7a4a10"/><path d="M13 2l3 2" stroke="#e04050" stroke-width="2"/></svg>
<svg class="a" style="left:1097px;top:563px;" width="16" height="16" viewBox="0 0 16 16"><text x="0" y="15" font-size="17" font-weight="bold" font-family="Liberation Serif" fill="#2a4a70">T</text></svg>
<svg class="a" style="left:1122px;top:563px;" width="16" height="16" viewBox="0 0 16 16"><ellipse cx="8" cy="7" rx="7" ry="5.5" fill="#e4eefa" stroke="#2a5a90" stroke-width="1.3"/><path d="M5 6h6M5 8.5h5" stroke="#3a6aa8"/><path d="M11 11l3 4-5-3" fill="#e4eefa" stroke="#2a5a90"/></svg>
<div class="a" style="left:1146px;top:563px;width:1px;height:16px;background:#c8c8c8"></div>
<svg class="a" style="left:1153px;top:563px;" width="16" height="16" viewBox="0 0 16 16"><path d="M8 1l7 7-7 7-7-7z" fill="#eee" stroke="#ccc"/></svg>
<svg class="a" style="left:1177px;top:570px;" width="6" height="4" viewBox="0 0 6 4"><path d="M0 0h6l-3 3z" fill="#999"/></svg>
<svg class="a" style="left:1189px;top:563px;" width="16" height="16" viewBox="0 0 16 16"><circle cx="8" cy="8" r="7" fill="#eee" stroke="#ccc"/><circle cx="5.5" cy="6" r="1" fill="#ccc"/><circle cx="10.5" cy="6" r="1" fill="#ccc"/><path d="M4.5 10q3.5 3 7 0" stroke="#ccc" fill="none"/></svg>
<svg class="a" style="left:1213px;top:570px;" width="6" height="4" viewBox="0 0 6 4"><path d="M0 0h6l-3 3z" fill="#999"/></svg>
<svg class="a" style="left:1225px;top:563px;" width="16" height="16" viewBox="0 0 16 16"><path d="M1 8l4-4v2h6V4l4 4-4 4v-2H5v2z" fill="#eee" stroke="#ccc"/></svg>
<svg class="a" style="left:1249px;top:570px;" width="6" height="4" viewBox="0 0 6 4"><path d="M0 0h6l-3 3z" fill="#999"/></svg>
<svg class="a" style="left:1262px;top:563px;" width="16" height="16" viewBox="0 0 16 16"><rect x="1" y="1" width="14" height="14" fill="#f4f4f4" stroke="#ccc"/><path d="M1 4h14M4 4v11" stroke="#ccc"/></svg>
<svg class="a" style="left:1285px;top:570px;" width="6" height="4" viewBox="0 0 6 4"><path d="M0 0h6l-3 3z" fill="#999"/></svg>
<svg class="a" style="left:1298px;top:563px;" width="16" height="16" viewBox="0 0 16 16"><path d="M1 2h14v9H7l-4 4v-4H1z" fill="#eee" stroke="#ccc"/></svg>
<svg class="a" style="left:1321px;top:570px;" width="6" height="4" viewBox="0 0 6 4"><path d="M0 0h6l-3 3z" fill="#999"/></svg>
<svg class="a" style="left:1334px;top:563px;" width="16" height="16" viewBox="0 0 16 16"><path d="M8 1l2 5h5l-4 3 2 6-5-4-5 4 2-6-4-3h5z" fill="#eee" stroke="#ccc"/></svg>
<svg class="a" style="left:1357px;top:570px;" width="6" height="4" viewBox="0 0 6 4"><path d="M0 0h6l-3 3z" fill="#999"/></svg>
<div class="a" style="left:1370px;top:563px;width:1px;height:16px;background:#c8c8c8"></div>
<svg class="a" style="left:1379px;top:563px;" width="16" height="16" viewBox="0 0 16 16"><path d="M1 13h1M4 9h1M7 12h1M8 5h1M12 3h1M14 9h1M11 13h1M5 2h1" stroke="#bbb" stroke-width="1.5"/></svg>
<div class="a" style="left:1403px;top:563px;width:1px;height:16px;background:#c8c8c8"></div>
<svg class="a" style="left:1412px;top:563px;" width="16" height="16" viewBox="0 0 16 16"><rect x="1" y="3" width="14" height="12" fill="#f4f4f4" stroke="#ccc"/><text x="4" y="13" font-size="10" font-family="Liberation Sans" fill="#ccc">A</text><path d="M4 3l4-3 4 3" stroke="#ccc" fill="none"/></svg>
<svg class="a" style="left:1437px;top:563px;" width="16" height="16" viewBox="0 0 16 16"><rect x="6" y="6" width="9" height="9" fill="#eee" stroke="#ccc"/><circle cx="6" cy="7" r="5" fill="#f2f2f2" stroke="#ccc"/></svg>
<div class="a" style="left:1461px;top:563px;width:1px;height:16px;background:#c8c8c8"></div>
<svg class="a" style="left:1471px;top:563px;" width="16" height="16" viewBox="0 0 16 16"><path d="M1 4l4-3h4l-4 3z M1 4h4v5H1z" fill="#eee" stroke="#ccc"/><path d="M7 8l4-3h4l-4 3zM7 8h4v7H7z" fill="#e4e4e4" stroke="#ccc"/></svg>
<div class="a" style="left:1496px;top:559px;width:11px;height:26px;background:linear-gradient(to bottom,#f4f4f4,#8c8c8c)"></div>
<svg class="a" style="left:1498px;top:578px;" width="7" height="4" viewBox="0 0 7 4"><path d="M0 0h7l-3.5 3.5z" fill="#111"/></svg>
<div class="a" style="left:1508px;top:556px;width:1px;height:30px;background:#c8c8c8"></div>
<svg class="a" style="left:1420px;top:593px;" width="130" height="12" viewBox="0 0 130 12"><circle cx="6" cy="6" r="5" fill="#fff" stroke="#1e3a5a"/><path d="M3.5 6h5" stroke="#1e3a5a" stroke-width="1.2"/><path d="M17 6h97" stroke="#777"/><circle cx="124" cy="6" r="5" fill="#fff" stroke="#1e3a5a"/><path d="M121.5 6h5M124 3.5v5" stroke="#1e3a5a" stroke-width="1.2"/><circle cx="64.5" cy="6" r="4" fill="#5a7a98" stroke="#2a4a68"/></svg>
</body></html>
